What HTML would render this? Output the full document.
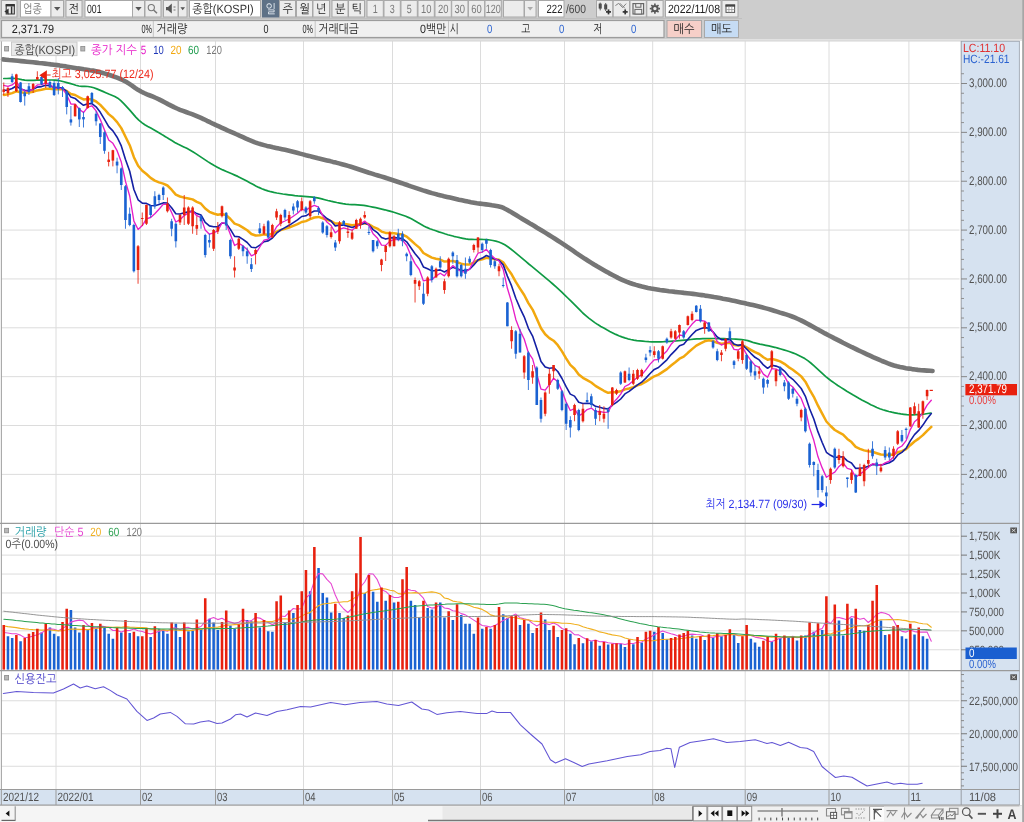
<!DOCTYPE html>
<html lang="ko"><head><meta charset="utf-8"><title>KOSPI chart</title>
<style>
html,body{margin:0;padding:0;background:#cdcdcd;overflow:hidden}
svg{display:block;font-family:"Liberation Sans","NanumGothic","Noto Sans CJK KR",sans-serif;text-rendering:geometricPrecision;will-change:transform}
</style></head><body>
<svg width="1024" height="822" viewBox="0 0 1024 822">
<rect x="0" y="0" width="1024" height="822" fill="#cdcdcd"/>
<rect x="0" y="41" width="961" height="748.5" fill="#ffffff"/>
<rect x="961" y="41" width="58.5" height="764" fill="#d6e2f0"/>
<rect x="0" y="789.5" width="961" height="15.5" fill="#d6e2f0"/>
<rect x="0" y="39" width="1022" height="2" fill="#e2e2e2"/>
<rect x="1019.5" y="41" width="2.5" height="764" fill="#ffffff"/>
<line x1="1019.4" y1="41" x2="1019.4" y2="805" stroke="#a8b0ba" stroke-width="1"/>
<line x1="56" y1="41" x2="56" y2="789.5" stroke="#dcdcdc" stroke-width="1"/>
<line x1="140.5" y1="41" x2="140.5" y2="789.5" stroke="#dcdcdc" stroke-width="1"/>
<line x1="215.5" y1="41" x2="215.5" y2="789.5" stroke="#dcdcdc" stroke-width="1"/>
<line x1="303.5" y1="41" x2="303.5" y2="789.5" stroke="#dcdcdc" stroke-width="1"/>
<line x1="392.5" y1="41" x2="392.5" y2="789.5" stroke="#dcdcdc" stroke-width="1"/>
<line x1="480.5" y1="41" x2="480.5" y2="789.5" stroke="#dcdcdc" stroke-width="1"/>
<line x1="564.5" y1="41" x2="564.5" y2="789.5" stroke="#dcdcdc" stroke-width="1"/>
<line x1="652.7" y1="41" x2="652.7" y2="789.5" stroke="#dcdcdc" stroke-width="1"/>
<line x1="745.2" y1="41" x2="745.2" y2="789.5" stroke="#dcdcdc" stroke-width="1"/>
<line x1="829" y1="41" x2="829" y2="789.5" stroke="#dcdcdc" stroke-width="1"/>
<line x1="908.9" y1="41" x2="908.9" y2="789.5" stroke="#dcdcdc" stroke-width="1"/>
<line x1="1.5" y1="474.38" x2="959.5" y2="474.38" stroke="#dcdcdc" stroke-width="1"/>
<line x1="1.5" y1="425.52" x2="959.5" y2="425.52" stroke="#dcdcdc" stroke-width="1"/>
<line x1="1.5" y1="376.65999999999997" x2="959.5" y2="376.65999999999997" stroke="#dcdcdc" stroke-width="1"/>
<line x1="1.5" y1="327.79999999999995" x2="959.5" y2="327.79999999999995" stroke="#dcdcdc" stroke-width="1"/>
<line x1="1.5" y1="278.94" x2="959.5" y2="278.94" stroke="#dcdcdc" stroke-width="1"/>
<line x1="1.5" y1="230.07999999999998" x2="959.5" y2="230.07999999999998" stroke="#dcdcdc" stroke-width="1"/>
<line x1="1.5" y1="181.22" x2="959.5" y2="181.22" stroke="#dcdcdc" stroke-width="1"/>
<line x1="1.5" y1="132.36" x2="959.5" y2="132.36" stroke="#dcdcdc" stroke-width="1"/>
<line x1="1.5" y1="83.5" x2="959.5" y2="83.5" stroke="#dcdcdc" stroke-width="1"/>
<line x1="1.5" y1="649.7700000000001" x2="959.5" y2="649.7700000000001" stroke="#dcdcdc" stroke-width="1"/>
<line x1="1.5" y1="630.84" x2="959.5" y2="630.84" stroke="#dcdcdc" stroke-width="1"/>
<line x1="1.5" y1="611.9100000000001" x2="959.5" y2="611.9100000000001" stroke="#dcdcdc" stroke-width="1"/>
<line x1="1.5" y1="592.98" x2="959.5" y2="592.98" stroke="#dcdcdc" stroke-width="1"/>
<line x1="1.5" y1="574.0500000000001" x2="959.5" y2="574.0500000000001" stroke="#dcdcdc" stroke-width="1"/>
<line x1="1.5" y1="555.12" x2="959.5" y2="555.12" stroke="#dcdcdc" stroke-width="1"/>
<line x1="1.5" y1="536.19" x2="959.5" y2="536.19" stroke="#dcdcdc" stroke-width="1"/>
<line x1="1.5" y1="700.75" x2="959.5" y2="700.75" stroke="#dcdcdc" stroke-width="1"/>
<line x1="1.5" y1="733.75" x2="959.5" y2="733.75" stroke="#dcdcdc" stroke-width="1"/>
<line x1="1.5" y1="766.25" x2="959.5" y2="766.25" stroke="#dcdcdc" stroke-width="1"/>
<rect x="6.7" y="636.25" width="2.55" height="33.35" fill="#1a62d2"/>
<rect x="10.89" y="638.0" width="2.55" height="31.6" fill="#1a62d2"/>
<rect x="19.29" y="641.25" width="2.55" height="28.35" fill="#1a62d2"/>
<rect x="40.27" y="632.5" width="2.55" height="37.1" fill="#1a62d2"/>
<rect x="48.67" y="627.5" width="2.55" height="42.1" fill="#1a62d2"/>
<rect x="52.86" y="633.75" width="2.55" height="35.85" fill="#1a62d2"/>
<rect x="57.06" y="636.25" width="2.55" height="33.35" fill="#1a62d2"/>
<rect x="69.65" y="610.0" width="2.55" height="59.6" fill="#1a62d2"/>
<rect x="73.85" y="627.5" width="2.55" height="42.1" fill="#1a62d2"/>
<rect x="78.05" y="632.5" width="2.55" height="37.1" fill="#1a62d2"/>
<rect x="86.44" y="630.0" width="2.55" height="39.6" fill="#1a62d2"/>
<rect x="94.83" y="628.75" width="2.55" height="40.85" fill="#1a62d2"/>
<rect x="103.23" y="627.5" width="2.55" height="42.1" fill="#1a62d2"/>
<rect x="107.42" y="633.75" width="2.55" height="35.85" fill="#1a62d2"/>
<rect x="111.62" y="638.75" width="2.55" height="30.85" fill="#1a62d2"/>
<rect x="120.02" y="632.5" width="2.55" height="37.1" fill="#1a62d2"/>
<rect x="128.41" y="633.0" width="2.55" height="36.6" fill="#1a62d2"/>
<rect x="136.8" y="636.25" width="2.55" height="33.35" fill="#1a62d2"/>
<rect x="149.4" y="637.0" width="2.55" height="32.6" fill="#1a62d2"/>
<rect x="157.79" y="628.75" width="2.55" height="40.85" fill="#1a62d2"/>
<rect x="161.99" y="630.5" width="2.55" height="39.1" fill="#1a62d2"/>
<rect x="166.18" y="633.75" width="2.55" height="35.85" fill="#1a62d2"/>
<rect x="174.58" y="623.75" width="2.55" height="45.85" fill="#1a62d2"/>
<rect x="178.77" y="637.0" width="2.55" height="32.6" fill="#1a62d2"/>
<rect x="187.17" y="631.25" width="2.55" height="38.35" fill="#1a62d2"/>
<rect x="191.37" y="630.5" width="2.55" height="39.1" fill="#1a62d2"/>
<rect x="199.76" y="628.75" width="2.55" height="40.85" fill="#1a62d2"/>
<rect x="208.15" y="618.75" width="2.55" height="50.85" fill="#1a62d2"/>
<rect x="212.35" y="622.5" width="2.55" height="47.1" fill="#1a62d2"/>
<rect x="216.55" y="630.0" width="2.55" height="39.6" fill="#1a62d2"/>
<rect x="229.14" y="625.5" width="2.55" height="44.1" fill="#1a62d2"/>
<rect x="233.34" y="628.75" width="2.55" height="40.85" fill="#1a62d2"/>
<rect x="245.93" y="620.0" width="2.55" height="49.6" fill="#1a62d2"/>
<rect x="250.12" y="621.25" width="2.55" height="48.35" fill="#1a62d2"/>
<rect x="258.52" y="627.5" width="2.55" height="42.1" fill="#1a62d2"/>
<rect x="266.91" y="631.25" width="2.55" height="38.35" fill="#1a62d2"/>
<rect x="271.11" y="631.75" width="2.55" height="37.85" fill="#1a62d2"/>
<rect x="283.7" y="622.5" width="2.55" height="47.1" fill="#1a62d2"/>
<rect x="292.09" y="613.0" width="2.55" height="56.6" fill="#1a62d2"/>
<rect x="308.88" y="591.25" width="2.55" height="78.35" fill="#1a62d2"/>
<rect x="317.27" y="568.0" width="2.55" height="101.6" fill="#1a62d2"/>
<rect x="321.47" y="593.0" width="2.55" height="76.6" fill="#1a62d2"/>
<rect x="325.67" y="597.5" width="2.55" height="72.1" fill="#1a62d2"/>
<rect x="329.87" y="612.5" width="2.55" height="57.1" fill="#1a62d2"/>
<rect x="338.26" y="613.0" width="2.55" height="56.6" fill="#1a62d2"/>
<rect x="342.46" y="618.0" width="2.55" height="51.6" fill="#1a62d2"/>
<rect x="363.44" y="593.0" width="2.55" height="76.6" fill="#1a62d2"/>
<rect x="371.84" y="591.75" width="2.55" height="77.85" fill="#1a62d2"/>
<rect x="376.03" y="601.75" width="2.55" height="67.85" fill="#1a62d2"/>
<rect x="384.43" y="600.75" width="2.55" height="68.85" fill="#1a62d2"/>
<rect x="392.82" y="602.5" width="2.55" height="67.1" fill="#1a62d2"/>
<rect x="409.61" y="600.75" width="2.55" height="68.85" fill="#1a62d2"/>
<rect x="413.81" y="605.0" width="2.55" height="64.6" fill="#1a62d2"/>
<rect x="418.0" y="617.5" width="2.55" height="52.1" fill="#1a62d2"/>
<rect x="426.4" y="608.0" width="2.55" height="61.6" fill="#1a62d2"/>
<rect x="430.59" y="609.5" width="2.55" height="60.1" fill="#1a62d2"/>
<rect x="438.99" y="602.5" width="2.55" height="67.1" fill="#1a62d2"/>
<rect x="443.19" y="617.5" width="2.55" height="52.1" fill="#1a62d2"/>
<rect x="451.58" y="620.0" width="2.55" height="49.6" fill="#1a62d2"/>
<rect x="459.97" y="615.0" width="2.55" height="54.6" fill="#1a62d2"/>
<rect x="464.17" y="623.75" width="2.55" height="45.85" fill="#1a62d2"/>
<rect x="468.37" y="623.75" width="2.55" height="45.85" fill="#1a62d2"/>
<rect x="472.56" y="633.75" width="2.55" height="35.85" fill="#1a62d2"/>
<rect x="480.96" y="628.75" width="2.55" height="40.85" fill="#1a62d2"/>
<rect x="489.35" y="628.75" width="2.55" height="40.85" fill="#1a62d2"/>
<rect x="501.94" y="614.25" width="2.55" height="55.35" fill="#1a62d2"/>
<rect x="506.14" y="618.0" width="2.55" height="51.6" fill="#1a62d2"/>
<rect x="518.73" y="625.0" width="2.55" height="44.6" fill="#1a62d2"/>
<rect x="527.12" y="623.75" width="2.55" height="45.85" fill="#1a62d2"/>
<rect x="531.32" y="633.0" width="2.55" height="36.6" fill="#1a62d2"/>
<rect x="543.91" y="619.5" width="2.55" height="50.1" fill="#1a62d2"/>
<rect x="548.11" y="630.0" width="2.55" height="39.6" fill="#1a62d2"/>
<rect x="556.5" y="637.0" width="2.55" height="32.6" fill="#1a62d2"/>
<rect x="569.1" y="633.75" width="2.55" height="35.85" fill="#1a62d2"/>
<rect x="573.29" y="644.25" width="2.55" height="25.35" fill="#1a62d2"/>
<rect x="581.69" y="643.25" width="2.55" height="26.35" fill="#1a62d2"/>
<rect x="590.08" y="641.25" width="2.55" height="28.35" fill="#1a62d2"/>
<rect x="598.47" y="645.75" width="2.55" height="23.85" fill="#1a62d2"/>
<rect x="606.87" y="644.5" width="2.55" height="25.1" fill="#1a62d2"/>
<rect x="619.46" y="643.75" width="2.55" height="25.85" fill="#1a62d2"/>
<rect x="623.66" y="647.0" width="2.55" height="22.6" fill="#1a62d2"/>
<rect x="632.05" y="644.25" width="2.55" height="25.35" fill="#1a62d2"/>
<rect x="640.44" y="642.5" width="2.55" height="27.1" fill="#1a62d2"/>
<rect x="653.03" y="631.75" width="2.55" height="37.85" fill="#1a62d2"/>
<rect x="661.43" y="633.0" width="2.55" height="36.6" fill="#1a62d2"/>
<rect x="665.63" y="639.25" width="2.55" height="30.35" fill="#1a62d2"/>
<rect x="690.81" y="635.5" width="2.55" height="34.1" fill="#1a62d2"/>
<rect x="695.0" y="638.75" width="2.55" height="30.85" fill="#1a62d2"/>
<rect x="703.4" y="640.0" width="2.55" height="29.6" fill="#1a62d2"/>
<rect x="711.79" y="637.5" width="2.55" height="32.1" fill="#1a62d2"/>
<rect x="720.19" y="636.25" width="2.55" height="33.35" fill="#1a62d2"/>
<rect x="732.78" y="635.0" width="2.55" height="34.6" fill="#1a62d2"/>
<rect x="736.98" y="643.0" width="2.55" height="26.6" fill="#1a62d2"/>
<rect x="749.57" y="638.75" width="2.55" height="30.85" fill="#1a62d2"/>
<rect x="753.76" y="642.5" width="2.55" height="27.1" fill="#1a62d2"/>
<rect x="757.96" y="646.75" width="2.55" height="22.85" fill="#1a62d2"/>
<rect x="770.55" y="641.25" width="2.55" height="28.35" fill="#1a62d2"/>
<rect x="778.95" y="638.0" width="2.55" height="31.6" fill="#1a62d2"/>
<rect x="787.34" y="637.5" width="2.55" height="32.1" fill="#1a62d2"/>
<rect x="795.73" y="640.5" width="2.55" height="29.1" fill="#1a62d2"/>
<rect x="804.13" y="635.5" width="2.55" height="34.1" fill="#1a62d2"/>
<rect x="812.52" y="631.75" width="2.55" height="37.85" fill="#1a62d2"/>
<rect x="820.91" y="630.0" width="2.55" height="39.6" fill="#1a62d2"/>
<rect x="829.31" y="636.25" width="2.55" height="33.35" fill="#1a62d2"/>
<rect x="837.7" y="620.5" width="2.55" height="49.1" fill="#1a62d2"/>
<rect x="841.9" y="635.5" width="2.55" height="34.1" fill="#1a62d2"/>
<rect x="850.29" y="618.25" width="2.55" height="51.35" fill="#1a62d2"/>
<rect x="858.69" y="630.0" width="2.55" height="39.6" fill="#1a62d2"/>
<rect x="862.88" y="630.75" width="2.55" height="38.85" fill="#1a62d2"/>
<rect x="879.67" y="620.5" width="2.55" height="49.1" fill="#1a62d2"/>
<rect x="883.87" y="635.0" width="2.55" height="34.6" fill="#1a62d2"/>
<rect x="900.66" y="636.25" width="2.55" height="33.35" fill="#1a62d2"/>
<rect x="904.86" y="638.75" width="2.55" height="30.85" fill="#1a62d2"/>
<rect x="913.25" y="634.5" width="2.55" height="35.1" fill="#1a62d2"/>
<rect x="921.64" y="636.25" width="2.55" height="33.35" fill="#1a62d2"/>
<rect x="925.84" y="638.75" width="2.55" height="30.85" fill="#1a62d2"/>
<polyline points="3.8,632.5 7.9,633.0 12.1,633.7 16.3,633.8 20.5,635.1 24.7,637.7 28.9,637.2 33.1,636.0 37.3,634.8 41.5,633.0 45.7,630.1 49.9,628.9 54.1,629.2 58.3,630.8 62.5,628.6 66.7,625.6 70.9,622.1 75.1,620.9 79.3,620.1 83.5,620.8 87.7,625.0 91.9,627.6 96.1,627.9 100.3,626.1 104.5,626.6 108.7,627.4 112.9,630.5 117.1,630.4 121.3,632.1 125.5,630.6 129.7,630.5 133.9,629.0 138.1,630.7 142.3,631.5 146.4,633.0 150.6,633.9 154.8,632.8 159.0,631.2 163.2,630.1 167.4,631.2 171.6,628.4 175.8,627.9 180.0,629.5 184.2,627.9 188.4,627.4 192.6,629.0 196.8,628.1 201.0,626.5 205.2,621.6 209.4,619.1 213.6,617.5 217.8,619.6 222.0,618.3 226.2,620.8 230.4,622.1 234.6,623.4 238.8,622.2 243.0,619.6 247.2,621.5 251.4,620.6 255.6,617.5 259.8,618.1 264.0,620.4 268.2,622.6 272.4,624.7 276.6,622.4 280.8,616.0 284.9,616.5 289.1,612.3 293.3,608.5 297.5,609.3 301.7,608.5 305.9,598.0 310.1,594.1 314.3,580.9 318.5,573.5 322.7,573.9 326.9,579.4 331.1,583.6 335.3,595.0 339.5,604.0 343.7,609.0 347.9,612.5 352.1,608.3 356.3,602.2 360.5,587.0 364.7,582.0 368.9,573.9 373.1,574.0 377.3,579.7 381.5,589.8 385.7,591.4 389.9,595.4 394.1,597.5 398.3,597.5 402.5,595.9 406.7,589.1 410.9,590.2 415.1,590.8 419.3,593.9 423.4,598.2 427.6,606.4 431.8,608.1 436.0,607.6 440.2,604.6 444.4,608.0 448.6,608.6 452.8,610.8 457.0,611.1 461.2,613.6 465.4,614.9 469.6,617.4 473.8,620.1 478.0,622.8 482.2,625.5 486.4,626.1 490.6,627.1 494.8,625.4 499.0,623.3 503.2,620.4 507.4,618.6 511.6,616.1 515.8,614.1 520.0,617.7 524.2,618.9 528.4,620.0 532.6,623.4 536.8,626.0 541.0,623.5 545.2,623.4 549.4,624.6 553.6,623.1 557.8,625.0 562.0,628.5 566.1,630.2 570.3,631.0 574.5,634.6 578.7,634.9 582.9,637.5 587.1,639.5 591.3,641.0 595.5,640.1 599.7,641.7 603.9,641.5 608.1,642.7 612.3,643.2 616.5,643.9 620.7,643.5 624.9,644.5 629.1,643.5 633.3,643.5 637.5,642.3 641.7,642.0 645.9,639.0 650.1,637.2 654.3,634.8 658.5,632.8 662.7,630.9 666.9,632.4 671.1,633.8 675.3,634.9 679.5,636.4 683.7,636.4 687.9,634.6 692.1,634.1 696.3,634.5 700.5,634.8 704.6,636.2 708.8,637.0 713.0,637.4 717.2,636.2 721.4,636.2 725.6,635.2 729.8,634.2 734.0,633.8 738.2,635.7 742.4,635.7 746.6,633.7 750.8,635.6 755.0,637.1 759.2,637.9 763.4,638.8 767.6,641.1 771.8,641.6 776.0,639.9 780.2,638.1 784.4,637.0 788.6,637.2 792.8,636.4 797.0,637.7 801.2,637.2 805.4,637.2 809.6,634.2 813.8,633.1 818.0,629.7 822.2,628.6 826.4,620.8 830.6,623.5 834.8,618.0 839.0,617.5 843.1,618.6 847.3,620.1 851.5,616.5 855.7,617.4 859.9,619.2 864.1,618.3 868.3,622.5 872.5,619.0 876.7,614.3 880.9,612.4 885.1,613.2 889.3,615.1 893.5,620.2 897.7,628.2 901.9,631.4 906.1,632.1 910.3,630.0 914.5,631.6 918.7,632.1 922.9,632.1 927.1,632.1 931.3,641.3" fill="none" stroke="#e648d2" stroke-width="1.1" stroke-linejoin="round" stroke-linecap="round"/>
<polyline points="3.8,626.0 7.9,626.6 12.1,627.1 16.3,627.6 20.5,628.4 24.7,628.9 28.9,629.3 33.1,629.6 37.3,629.8 41.5,630.1 45.7,630.0 49.9,630.0 54.1,630.4 58.3,630.9 62.5,630.7 66.7,629.8 70.9,629.0 75.1,629.1 79.3,629.4 83.5,629.4 87.7,629.6 91.9,629.0 96.1,628.5 100.3,627.9 104.5,627.2 108.7,627.0 112.9,627.3 117.1,627.1 121.3,627.3 125.5,626.6 129.7,627.1 133.9,627.3 138.1,627.5 142.3,627.5 146.4,627.8 150.6,629.2 154.8,630.0 159.0,630.0 163.2,629.9 167.4,630.4 171.6,630.0 175.8,630.0 180.0,630.5 184.2,630.4 188.4,630.6 192.6,630.4 196.8,629.5 201.0,629.5 205.2,627.8 209.4,627.7 213.6,627.2 217.8,627.1 222.0,626.4 226.2,625.1 230.4,625.0 234.6,624.6 238.8,624.5 243.0,623.5 247.2,623.0 251.4,622.3 255.6,621.9 259.8,622.0 264.0,621.2 268.2,621.6 272.4,621.6 276.6,620.2 280.8,619.0 284.9,618.7 289.1,619.3 293.3,619.0 297.5,618.1 301.7,616.2 305.9,613.6 310.1,612.6 314.3,608.7 318.5,605.7 322.7,604.1 326.9,603.5 331.1,603.1 335.3,602.3 339.5,602.3 343.7,601.8 347.9,601.6 352.1,599.6 356.3,596.6 360.5,593.4 364.7,593.3 368.9,590.9 373.1,590.0 377.3,589.4 381.5,588.6 385.7,589.0 389.9,590.3 394.1,590.9 398.3,593.6 402.5,594.1 406.7,592.9 410.9,593.0 415.1,592.6 419.3,593.3 423.4,592.7 427.6,592.2 431.8,591.9 436.0,592.5 440.2,593.9 444.4,598.0 448.6,598.9 452.8,601.1 457.0,601.8 461.2,602.4 465.4,604.2 469.6,605.4 473.8,607.3 478.0,608.1 482.2,609.4 486.4,611.8 490.6,614.9 494.8,616.1 499.0,616.2 503.2,616.0 507.4,616.9 511.6,617.3 515.8,617.6 520.0,618.7 524.2,619.6 528.4,619.9 532.6,621.0 536.8,621.4 541.0,621.8 545.2,622.0 549.4,622.3 553.6,622.4 557.8,622.6 562.0,623.2 566.1,623.2 570.3,623.5 574.5,624.3 578.7,625.0 582.9,626.8 587.1,628.0 591.3,629.1 595.5,630.3 599.7,631.9 603.9,632.7 608.1,633.9 612.3,634.9 616.5,635.5 620.7,636.2 624.9,638.0 629.1,639.0 633.3,639.7 637.5,640.2 641.7,640.5 645.9,640.6 650.1,640.7 654.3,640.6 658.5,639.8 662.7,639.5 666.9,639.3 671.1,639.3 675.3,639.1 679.5,638.8 683.7,638.2 687.9,637.6 692.1,637.1 696.3,636.9 700.5,636.5 704.6,636.4 708.8,635.7 713.0,635.6 717.2,635.1 721.4,635.0 725.6,634.7 729.8,634.5 734.0,634.8 738.2,635.3 742.4,635.8 746.6,635.4 750.8,635.4 755.0,635.6 759.2,636.1 763.4,636.4 767.6,636.6 771.8,637.1 776.0,637.0 780.2,637.0 784.4,636.9 788.6,636.8 792.8,637.0 797.0,637.1 801.2,637.2 805.4,637.2 809.6,636.5 813.8,636.7 818.0,636.1 822.2,635.4 826.4,633.4 830.6,634.0 834.8,632.3 839.0,631.2 843.1,630.6 847.3,628.8 851.5,627.9 855.7,626.2 859.9,626.0 864.1,625.7 868.3,625.1 872.5,623.3 876.7,620.7 880.9,619.7 885.1,619.7 889.3,619.6 893.5,619.8 897.7,619.5 901.9,620.1 906.1,620.6 910.3,621.9 914.5,621.9 918.7,623.0 922.9,623.8 927.1,624.0 931.3,627.2" fill="none" stroke="#f0b020" stroke-width="1.1" stroke-linejoin="round" stroke-linecap="round"/>
<rect x="2.5" y="625.0" width="2.55" height="44.6" fill="#e8200e"/>
<rect x="15.09" y="635.0" width="2.55" height="34.6" fill="#e8200e"/>
<rect x="23.48" y="638.0" width="2.55" height="31.6" fill="#e8200e"/>
<rect x="27.68" y="633.75" width="2.55" height="35.85" fill="#e8200e"/>
<rect x="31.88" y="632.0" width="2.55" height="37.6" fill="#e8200e"/>
<rect x="36.08" y="628.75" width="2.55" height="40.85" fill="#e8200e"/>
<rect x="44.47" y="623.75" width="2.55" height="45.85" fill="#e8200e"/>
<rect x="61.26" y="622.0" width="2.55" height="47.6" fill="#e8200e"/>
<rect x="65.45" y="608.75" width="2.55" height="60.85" fill="#e8200e"/>
<rect x="82.24" y="625.0" width="2.55" height="44.6" fill="#e8200e"/>
<rect x="90.64" y="623.0" width="2.55" height="46.6" fill="#e8200e"/>
<rect x="99.03" y="623.75" width="2.55" height="45.85" fill="#e8200e"/>
<rect x="115.82" y="628.0" width="2.55" height="41.6" fill="#e8200e"/>
<rect x="124.21" y="620.0" width="2.55" height="49.6" fill="#e8200e"/>
<rect x="132.61" y="631.75" width="2.55" height="37.85" fill="#e8200e"/>
<rect x="141.0" y="636.25" width="2.55" height="33.35" fill="#e8200e"/>
<rect x="145.2" y="628.0" width="2.55" height="41.6" fill="#e8200e"/>
<rect x="153.59" y="626.25" width="2.55" height="43.35" fill="#e8200e"/>
<rect x="170.38" y="622.5" width="2.55" height="47.1" fill="#e8200e"/>
<rect x="182.97" y="622.5" width="2.55" height="47.1" fill="#e8200e"/>
<rect x="195.56" y="619.5" width="2.55" height="50.1" fill="#e8200e"/>
<rect x="203.96" y="598.25" width="2.55" height="71.35" fill="#e8200e"/>
<rect x="220.74" y="622.0" width="2.55" height="47.6" fill="#e8200e"/>
<rect x="224.94" y="610.5" width="2.55" height="59.1" fill="#e8200e"/>
<rect x="237.53" y="624.5" width="2.55" height="45.1" fill="#e8200e"/>
<rect x="241.73" y="608.75" width="2.55" height="60.85" fill="#e8200e"/>
<rect x="254.32" y="613.0" width="2.55" height="56.6" fill="#e8200e"/>
<rect x="262.71" y="620.0" width="2.55" height="49.6" fill="#e8200e"/>
<rect x="275.31" y="601.25" width="2.55" height="68.35" fill="#e8200e"/>
<rect x="279.5" y="595.5" width="2.55" height="74.1" fill="#e8200e"/>
<rect x="287.9" y="610.5" width="2.55" height="59.1" fill="#e8200e"/>
<rect x="296.29" y="605.0" width="2.55" height="64.6" fill="#e8200e"/>
<rect x="300.49" y="591.25" width="2.55" height="78.35" fill="#e8200e"/>
<rect x="304.68" y="570.0" width="2.55" height="99.6" fill="#e8200e"/>
<rect x="313.08" y="547.0" width="2.55" height="122.6" fill="#e8200e"/>
<rect x="334.06" y="603.75" width="2.55" height="65.85" fill="#e8200e"/>
<rect x="346.65" y="615.5" width="2.55" height="54.1" fill="#e8200e"/>
<rect x="350.85" y="591.25" width="2.55" height="78.35" fill="#e8200e"/>
<rect x="355.05" y="573.25" width="2.55" height="96.35" fill="#e8200e"/>
<rect x="359.25" y="537.0" width="2.55" height="132.6" fill="#e8200e"/>
<rect x="367.64" y="575.0" width="2.55" height="94.6" fill="#e8200e"/>
<rect x="380.23" y="587.5" width="2.55" height="82.1" fill="#e8200e"/>
<rect x="388.62" y="595.0" width="2.55" height="74.6" fill="#e8200e"/>
<rect x="397.02" y="601.75" width="2.55" height="67.85" fill="#e8200e"/>
<rect x="401.22" y="579.25" width="2.55" height="90.35" fill="#e8200e"/>
<rect x="405.41" y="567.0" width="2.55" height="102.6" fill="#e8200e"/>
<rect x="422.2" y="600.75" width="2.55" height="68.85" fill="#e8200e"/>
<rect x="434.79" y="602.5" width="2.55" height="67.1" fill="#e8200e"/>
<rect x="447.38" y="611.25" width="2.55" height="58.35" fill="#e8200e"/>
<rect x="455.78" y="604.25" width="2.55" height="65.35" fill="#e8200e"/>
<rect x="476.76" y="617.5" width="2.55" height="52.1" fill="#e8200e"/>
<rect x="485.16" y="627.0" width="2.55" height="42.6" fill="#e8200e"/>
<rect x="493.55" y="625.0" width="2.55" height="44.6" fill="#e8200e"/>
<rect x="497.75" y="607.0" width="2.55" height="62.6" fill="#e8200e"/>
<rect x="510.34" y="616.25" width="2.55" height="53.35" fill="#e8200e"/>
<rect x="514.53" y="615.0" width="2.55" height="54.6" fill="#e8200e"/>
<rect x="522.93" y="620.0" width="2.55" height="49.6" fill="#e8200e"/>
<rect x="535.52" y="628.0" width="2.55" height="41.6" fill="#e8200e"/>
<rect x="539.72" y="612.5" width="2.55" height="57.1" fill="#e8200e"/>
<rect x="552.31" y="625.75" width="2.55" height="43.85" fill="#e8200e"/>
<rect x="560.7" y="630.0" width="2.55" height="39.6" fill="#e8200e"/>
<rect x="564.9" y="628.25" width="2.55" height="41.35" fill="#e8200e"/>
<rect x="577.49" y="638.0" width="2.55" height="31.6" fill="#e8200e"/>
<rect x="585.88" y="638.25" width="2.55" height="31.35" fill="#e8200e"/>
<rect x="594.28" y="640.0" width="2.55" height="29.6" fill="#e8200e"/>
<rect x="602.67" y="642.0" width="2.55" height="27.6" fill="#e8200e"/>
<rect x="611.07" y="643.75" width="2.55" height="25.85" fill="#e8200e"/>
<rect x="615.26" y="643.25" width="2.55" height="26.35" fill="#e8200e"/>
<rect x="627.85" y="639.5" width="2.55" height="30.1" fill="#e8200e"/>
<rect x="636.25" y="637.0" width="2.55" height="32.6" fill="#e8200e"/>
<rect x="644.64" y="631.75" width="2.55" height="37.85" fill="#e8200e"/>
<rect x="648.84" y="630.75" width="2.55" height="38.85" fill="#e8200e"/>
<rect x="657.23" y="627.0" width="2.55" height="42.6" fill="#e8200e"/>
<rect x="669.82" y="638.0" width="2.55" height="31.6" fill="#e8200e"/>
<rect x="674.02" y="637.0" width="2.55" height="32.6" fill="#e8200e"/>
<rect x="678.22" y="634.5" width="2.55" height="35.1" fill="#e8200e"/>
<rect x="682.41" y="633.0" width="2.55" height="36.6" fill="#e8200e"/>
<rect x="686.61" y="630.5" width="2.55" height="39.1" fill="#e8200e"/>
<rect x="699.2" y="636.25" width="2.55" height="33.35" fill="#e8200e"/>
<rect x="707.6" y="634.25" width="2.55" height="35.35" fill="#e8200e"/>
<rect x="715.99" y="633.25" width="2.55" height="36.35" fill="#e8200e"/>
<rect x="724.38" y="635.0" width="2.55" height="34.6" fill="#e8200e"/>
<rect x="728.58" y="629.25" width="2.55" height="40.35" fill="#e8200e"/>
<rect x="741.17" y="636.25" width="2.55" height="33.35" fill="#e8200e"/>
<rect x="745.37" y="625.0" width="2.55" height="44.6" fill="#e8200e"/>
<rect x="762.16" y="640.75" width="2.55" height="28.85" fill="#e8200e"/>
<rect x="766.35" y="636.75" width="2.55" height="32.85" fill="#e8200e"/>
<rect x="774.75" y="633.75" width="2.55" height="35.85" fill="#e8200e"/>
<rect x="783.14" y="635.5" width="2.55" height="34.1" fill="#e8200e"/>
<rect x="791.54" y="637.0" width="2.55" height="32.6" fill="#e8200e"/>
<rect x="799.93" y="635.5" width="2.55" height="34.1" fill="#e8200e"/>
<rect x="808.32" y="622.5" width="2.55" height="47.1" fill="#e8200e"/>
<rect x="816.72" y="623.25" width="2.55" height="46.35" fill="#e8200e"/>
<rect x="825.11" y="596.25" width="2.55" height="73.35" fill="#e8200e"/>
<rect x="833.51" y="604.5" width="2.55" height="65.1" fill="#e8200e"/>
<rect x="846.1" y="603.75" width="2.55" height="65.85" fill="#e8200e"/>
<rect x="854.49" y="608.75" width="2.55" height="60.85" fill="#e8200e"/>
<rect x="867.08" y="625.0" width="2.55" height="44.6" fill="#e8200e"/>
<rect x="871.28" y="600.75" width="2.55" height="68.85" fill="#e8200e"/>
<rect x="875.48" y="585.0" width="2.55" height="84.6" fill="#e8200e"/>
<rect x="888.07" y="634.25" width="2.55" height="35.35" fill="#e8200e"/>
<rect x="892.26" y="626.25" width="2.55" height="43.35" fill="#e8200e"/>
<rect x="896.46" y="625.0" width="2.55" height="44.6" fill="#e8200e"/>
<rect x="909.05" y="623.75" width="2.55" height="45.85" fill="#e8200e"/>
<rect x="917.45" y="627.5" width="2.55" height="42.1" fill="#e8200e"/>
<polyline points="3.8,619.2 6.8,619.5 9.8,619.8 12.8,620.1 15.8,620.5 18.8,620.8 21.8,621.1 24.8,621.4 27.8,621.7 30.8,622.0 33.8,622.3 36.8,622.6 39.8,622.9 42.8,623.1 45.8,623.4 48.8,623.6 51.8,623.9 54.8,624.1 57.8,624.4 60.8,624.6 63.8,624.8 66.8,625.0 69.8,625.2 72.8,625.4 75.8,625.6 78.8,625.8 81.8,626.0 84.8,626.2 87.8,626.3 90.8,626.5 93.8,626.7 96.8,626.8 99.8,627.0 102.8,627.1 105.8,627.3 108.8,627.4 111.8,627.6 114.8,627.7 117.8,627.8 120.8,627.9 123.8,628.0 126.8,628.1 129.8,628.2 132.8,628.3 135.8,628.4 138.8,628.5 141.8,628.6 144.8,628.6 147.8,628.7 150.8,628.8 153.8,628.8 156.8,628.8 159.8,628.9 162.8,628.9 165.8,628.9 168.8,628.9 171.8,628.9 174.8,628.9 177.8,628.9 180.8,628.9 183.8,628.9 186.8,628.9 189.8,628.8 192.8,628.8 195.8,628.8 198.8,628.8 201.8,628.7 204.8,628.7 207.8,628.7 210.8,628.7 213.8,628.7 216.8,628.6 219.8,628.6 222.8,628.6 225.8,628.5 228.8,628.4 231.8,628.4 234.8,628.3 237.8,628.1 240.8,628.0 243.8,627.8 246.8,627.6 249.8,627.4 252.8,627.2 255.8,627.0 258.8,626.7 261.8,626.5 264.8,626.2 267.8,626.0 270.8,625.7 273.8,625.4 276.8,625.1 279.8,624.8 282.8,624.5 285.8,624.2 288.8,623.9 291.8,623.5 294.8,623.1 297.8,622.7 300.8,622.2 303.8,621.6 306.8,621.1 309.8,620.7 312.8,620.3 315.8,619.9 318.8,619.7 321.8,619.6 324.8,619.5 327.8,619.4 330.8,619.4 333.8,619.3 336.8,619.1 339.8,618.8 342.8,618.4 345.8,617.8 348.8,617.2 351.8,616.6 354.8,615.9 357.8,615.2 360.8,614.6 363.8,614.0 366.8,613.4 369.8,613.0 372.8,612.5 375.8,612.1 378.8,611.6 381.8,611.2 384.8,610.8 387.8,610.3 390.8,609.9 393.8,609.4 396.8,608.9 399.8,608.4 402.8,608.0 405.8,607.5 408.8,607.0 411.8,606.6 414.8,606.3 417.8,606.0 420.8,605.7 423.8,605.4 426.8,605.2 429.8,605.0 432.8,604.9 435.8,604.7 438.8,604.6 441.8,604.4 444.8,604.3 447.8,604.1 450.8,604.0 453.8,603.9 456.8,603.8 459.8,603.8 462.8,603.8 465.8,603.8 468.8,603.8 471.8,603.9 474.8,604.0 477.8,604.1 480.8,604.2 483.8,604.3 486.8,604.4 489.8,604.5 492.8,604.5 495.8,604.5 498.8,604.0 501.8,603.4 504.8,603.0 507.8,603.0 510.8,603.0 513.8,603.0 516.8,603.1 519.8,603.3 522.8,603.4 525.8,603.5 528.8,603.7 531.8,603.8 534.8,603.9 537.8,604.0 540.8,604.2 543.8,604.3 546.8,604.6 549.8,605.0 552.8,605.5 555.8,606.3 558.8,607.2 561.8,608.0 564.8,608.7 567.8,609.2 570.8,609.7 573.8,610.2 576.8,610.6 579.8,611.1 582.8,611.5 585.8,611.9 588.8,612.4 591.8,612.8 594.8,613.2 597.8,613.7 600.8,614.2 603.8,614.8 606.8,615.4 609.8,616.0 612.8,616.8 615.8,617.6 618.8,618.4 621.8,619.2 624.8,620.0 627.8,620.7 630.8,621.4 633.8,622.1 636.8,622.7 639.8,623.4 642.8,624.0 645.8,624.6 648.8,625.2 651.8,625.7 654.8,626.2 657.8,626.7 660.8,627.1 663.8,627.4 666.8,627.8 669.8,628.1 672.8,628.4 675.8,628.7 678.8,629.1 681.8,629.5 684.8,629.9 687.8,630.3 690.8,630.8 693.8,631.2 696.8,631.6 699.8,632.0 702.8,632.3 705.8,632.6 708.8,632.8 711.8,632.9 714.8,633.1 717.8,633.2 720.8,633.3 723.8,633.4 726.8,633.4 729.8,633.5 732.8,633.6 735.8,633.8 738.8,634.0 741.8,634.2 744.8,634.5 747.8,634.7 750.8,634.9 753.8,635.2 756.8,635.4 759.8,635.6 762.8,635.8 765.8,636.0 768.8,636.2 771.8,636.3 774.8,636.5 777.8,636.6 780.8,636.8 783.8,636.9 786.8,637.0 789.8,637.0 792.8,637.0 795.8,637.0 798.8,636.9 801.8,636.7 804.8,636.6 807.8,636.3 810.8,636.1 813.8,635.9 816.8,635.7 819.8,635.5 822.8,635.4 825.8,635.3 828.8,635.2 831.8,635.1 834.8,635.0 837.8,634.9 840.8,634.8 843.8,634.6 846.8,634.3 849.8,634.0 852.8,633.6 855.8,633.2 858.8,632.7 861.8,632.3 864.8,631.8 867.8,631.5 870.8,631.2 873.8,630.9 876.8,630.7 879.8,630.6 882.8,630.4 885.8,630.3 888.8,630.2 891.8,630.1 894.8,630.0 897.8,629.9 900.8,629.8 903.8,629.7 906.8,629.7 909.8,629.6 912.8,629.5 915.8,629.5 918.8,629.5 921.8,629.5 924.8,629.6 927.8,629.8 930.8,630.0 931.0,630.0" fill="none" stroke="#2aa050" stroke-width="1.05" stroke-linejoin="round" stroke-linecap="round"/>
<polyline points="3.8,611.2 6.8,611.6 9.8,611.9 12.8,612.2 15.8,612.6 18.8,612.9 21.8,613.3 24.8,613.6 27.8,613.9 30.8,614.3 33.8,614.6 36.8,615.0 39.8,615.3 42.8,615.6 45.8,615.9 48.8,616.2 51.8,616.5 54.8,616.8 57.8,617.1 60.8,617.4 63.8,617.6 66.8,617.8 69.8,618.1 72.8,618.3 75.8,618.5 78.8,618.7 81.8,618.9 84.8,619.1 87.8,619.3 90.8,619.5 93.8,619.6 96.8,619.8 99.8,620.0 102.8,620.1 105.8,620.3 108.8,620.4 111.8,620.6 114.8,620.7 117.8,620.9 120.8,621.0 123.8,621.2 126.8,621.3 129.8,621.5 132.8,621.6 135.8,621.8 138.8,621.9 141.8,622.0 144.8,622.1 147.8,622.3 150.8,622.4 153.8,622.5 156.8,622.6 159.8,622.7 162.8,622.8 165.8,622.8 168.8,622.9 171.8,623.0 174.8,623.0 177.8,623.0 180.8,623.1 183.8,623.1 186.8,623.1 189.8,623.1 192.8,623.2 195.8,623.2 198.8,623.2 201.8,623.2 204.8,623.2 207.8,623.2 210.8,623.2 213.8,623.2 216.8,623.2 219.8,623.2 222.8,623.2 225.8,623.1 228.8,623.1 231.8,623.1 234.8,623.1 237.8,623.1 240.8,623.1 243.8,623.1 246.8,623.0 249.8,623.0 252.8,623.0 255.8,623.0 258.8,623.0 261.8,623.0 264.8,622.9 267.8,622.9 270.8,622.8 273.8,622.8 276.8,622.8 279.8,622.7 282.8,622.6 285.8,622.6 288.8,622.5 291.8,622.5 294.8,622.4 297.8,622.3 300.8,622.3 303.8,622.2 306.8,622.2 309.8,622.1 312.8,622.0 315.8,622.0 318.8,621.9 321.8,621.8 324.8,621.7 327.8,621.7 330.8,621.6 333.8,621.5 336.8,621.4 339.8,621.3 342.8,621.1 345.8,621.0 348.8,620.9 351.8,620.7 354.8,620.6 357.8,620.4 360.8,620.3 363.8,620.1 366.8,620.0 369.8,619.8 372.8,619.6 375.8,619.5 378.8,619.3 381.8,619.1 384.8,619.0 387.8,618.9 390.8,618.7 393.8,618.6 396.8,618.4 399.8,618.3 402.8,618.2 405.8,618.0 408.8,617.9 411.8,617.8 414.8,617.6 417.8,617.5 420.8,617.4 423.8,617.3 426.8,617.2 429.8,617.0 432.8,616.9 435.8,616.9 438.8,616.8 441.8,616.7 444.8,616.7 447.8,616.6 450.8,616.6 453.8,616.5 456.8,616.5 459.8,616.5 462.8,616.5 465.8,616.5 468.8,616.5 471.8,616.5 474.8,616.5 477.8,616.5 480.8,616.4 483.8,616.4 486.8,616.4 489.8,616.3 492.8,616.3 495.8,616.2 498.8,616.1 501.8,616.0 504.8,615.9 507.8,615.8 510.8,615.6 513.8,615.5 516.8,615.3 519.8,615.2 522.8,615.0 525.8,614.9 528.8,614.8 531.8,614.7 534.8,614.6 537.8,614.5 540.8,614.5 543.8,614.5 546.8,614.5 549.8,614.6 552.8,614.6 555.8,614.7 558.8,614.7 561.8,614.8 564.8,614.9 567.8,615.0 570.8,615.1 573.8,615.2 576.8,615.4 579.8,615.5 582.8,615.6 585.8,615.7 588.8,615.8 591.8,615.9 594.8,616.0 597.8,616.1 600.8,616.2 603.8,616.2 606.8,616.3 609.8,616.3 612.8,616.4 615.8,616.4 618.8,616.4 621.8,616.5 624.8,616.5 627.8,616.5 630.8,616.5 633.8,616.5 636.8,616.6 639.8,616.6 642.8,616.6 645.8,616.6 648.8,616.6 651.8,616.6 654.8,616.6 657.8,616.7 660.8,616.7 663.8,616.7 666.8,616.8 669.8,616.8 672.8,616.9 675.8,616.9 678.8,617.0 681.8,617.0 684.8,617.1 687.8,617.2 690.8,617.3 693.8,617.5 696.8,617.6 699.8,617.7 702.8,617.8 705.8,618.0 708.8,618.1 711.8,618.3 714.8,618.4 717.8,618.6 720.8,618.7 723.8,618.8 726.8,619.0 729.8,619.1 732.8,619.2 735.8,619.3 738.8,619.2 741.8,619.0 744.8,619.0 747.8,619.1 750.8,619.2 753.8,619.3 756.8,619.4 759.8,619.6 762.8,619.7 765.8,619.8 768.8,619.9 771.8,620.1 774.8,620.2 777.8,620.4 780.8,620.5 783.8,620.7 786.8,620.8 789.8,621.0 792.8,621.1 795.8,621.3 798.8,621.5 801.8,621.7 804.8,621.9 807.8,622.1 810.8,622.3 813.8,622.6 816.8,622.8 819.8,623.0 822.8,623.2 825.8,623.4 828.8,623.6 831.8,623.8 834.8,624.0 837.8,624.2 840.8,624.4 843.8,624.5 846.8,624.7 849.8,624.9 852.8,625.1 855.8,625.3 858.8,625.5 861.8,625.7 864.8,625.9 867.8,626.1 870.8,626.3 873.8,626.5 876.8,626.7 879.8,626.9 882.8,627.1 885.8,627.3 888.8,627.5 891.8,627.7 894.8,627.9 897.8,628.1 900.8,628.3 903.8,628.5 906.8,628.7 909.8,628.9 912.8,629.2 915.8,629.4 918.8,629.6 921.8,629.8 924.8,630.0 927.8,630.3 930.8,630.5 931.0,630.5" fill="none" stroke="#8f8f8f" stroke-width="0.95" stroke-linejoin="round" stroke-linecap="round"/>
<polyline points="3.3,693.4 16.7,691.4 33.4,692.4 53.4,693.0 63.5,689.0 73.5,684.0 80.2,688.0 86.8,686.0 95.2,688.7 103.5,686.7 110.2,690.4 116.9,694.7 126.9,699.0 136.9,711.4 147.0,720.4 153.6,718.0 160.3,714.0 170.3,712.4 177.0,716.4 185.4,723.8 193.7,724.0 200.4,722.0 208.8,720.8 217.0,723.4 222.0,723.0 230.5,719.0 235.5,714.8 240.5,714.0 247.0,717.0 255.5,713.0 267.0,715.4 277.0,711.4 287.0,709.8 300.6,706.4 310.6,707.0 320.6,704.7 330.7,702.4 345.0,704.7 360.0,702.4 376.8,701.4 386.8,704.0 398.5,705.4 411.8,702.0 421.8,709.0 428.5,710.0 436.9,714.4 446.9,712.8 460.3,711.4 477.0,713.4 487.0,713.4 492.0,711.0 497.0,712.4 510.4,712.4 520.4,724.8 530.4,734.0 542.0,744.0 550.4,759.8 555.5,763.0 565.5,758.8 573.8,762.5 582.2,766.5 588.9,764.0 607.2,760.8 627.3,756.5 640.6,754.8 650.0,751.5 660.0,750.5 666.7,748.2 671.0,748.8 674.7,767.5 679.4,747.2 690.0,742.5 703.5,740.5 713.5,738.8 726.8,742.5 740.2,741.5 755.2,739.8 767.0,743.5 772.0,742.5 780.3,745.5 788.6,742.2 800.3,747.5 807.0,748.2 813.7,751.5 822.0,766.5 828.7,772.2 835.4,777.5 843.7,776.0 852.0,777.2 860.4,782.2 867.0,786.0 877.0,784.0 887.0,782.0 893.8,784.2 900.5,783.2 907.2,784.2 917.2,784.2 922.2,783.2" fill="none" stroke="#6255d4" stroke-width="1.05" stroke-linejoin="round" stroke-linecap="round"/>
<polyline points="3.0,59.4 6.0,59.7 9.0,60.0 12.0,60.2 15.0,60.5 18.0,60.8 21.0,61.1 24.0,61.4 27.0,61.7 30.0,62.0 33.0,62.3 36.0,62.6 39.0,63.0 42.0,63.3 45.0,63.6 48.0,64.0 51.0,64.4 54.0,64.7 57.0,65.1 60.0,65.6 63.0,66.0 66.0,66.4 69.0,66.9 72.0,67.4 75.0,67.9 78.0,68.4 81.0,68.8 84.0,69.3 87.0,69.7 90.0,70.2 93.0,70.6 96.0,71.2 99.0,71.9 102.0,72.7 105.0,73.6 108.0,74.5 111.0,75.5 114.0,76.6 117.0,77.7 120.0,78.9 123.0,80.2 126.0,81.8 129.0,83.6 132.0,85.6 135.0,87.8 138.0,89.8 141.0,91.5 144.0,93.0 147.0,94.3 150.0,95.5 153.0,96.7 156.0,98.0 159.0,99.4 162.0,100.9 165.0,102.5 168.0,104.1 171.0,105.6 174.0,107.1 177.0,108.5 180.0,109.8 183.0,110.9 186.0,112.0 189.0,113.1 192.0,114.1 195.0,115.3 198.0,116.6 201.0,117.9 204.0,119.3 207.0,120.8 210.0,122.2 213.0,123.7 216.0,125.1 219.0,126.4 222.0,127.8 225.0,129.2 228.0,130.6 231.0,131.9 234.0,133.2 237.0,134.5 240.0,135.9 243.0,137.2 246.0,138.6 249.0,139.9 252.0,141.1 255.0,142.3 258.0,143.4 261.0,144.3 264.0,145.1 267.0,145.9 270.0,146.6 273.0,147.3 276.0,147.9 279.0,148.6 282.0,149.2 285.0,149.8 288.0,150.5 291.0,151.2 294.0,152.0 297.0,152.8 300.0,153.6 303.0,154.4 306.0,155.2 309.0,155.9 312.0,156.7 315.0,157.5 318.0,158.3 321.0,159.0 324.0,159.7 327.0,160.4 330.0,161.1 333.0,161.9 336.0,162.6 339.0,163.4 342.0,164.2 345.0,165.0 348.0,165.9 351.0,166.8 354.0,167.7 357.0,168.7 360.0,169.7 363.0,170.7 366.0,171.7 369.0,172.7 372.0,173.6 375.0,174.6 378.0,175.5 381.0,176.4 384.0,177.3 387.0,178.3 390.0,179.2 393.0,180.2 396.0,181.2 399.0,182.2 402.0,183.2 405.0,184.3 408.0,185.3 411.0,186.4 414.0,187.4 417.0,188.4 420.0,189.4 423.0,190.4 426.0,191.3 429.0,192.2 432.0,193.1 435.0,193.9 438.0,194.7 441.0,195.4 444.0,196.2 447.0,196.9 450.0,197.6 453.0,198.3 456.0,199.0 459.0,199.7 462.0,200.3 465.0,200.9 468.0,201.6 471.0,202.2 474.0,202.7 477.0,203.2 480.0,203.6 483.0,204.0 486.0,204.4 489.0,204.8 492.0,205.3 495.0,205.7 498.0,206.2 501.0,206.9 504.0,208.2 507.0,209.7 510.0,211.4 513.0,213.2 516.0,215.0 519.0,216.9 522.0,218.7 525.0,220.5 528.0,222.3 531.0,224.1 534.0,225.8 537.0,227.7 540.0,229.5 543.0,231.3 546.0,233.1 549.0,235.0 552.0,236.9 555.0,238.8 558.0,240.7 561.0,242.6 564.0,244.6 567.0,246.7 570.0,248.7 573.0,250.7 576.0,252.8 579.0,254.8 582.0,256.8 585.0,258.8 588.0,260.7 591.0,262.6 594.0,264.5 597.0,266.3 600.0,268.0 603.0,269.7 606.0,271.4 609.0,273.1 612.0,274.7 615.0,276.3 618.0,277.9 621.0,279.3 624.0,280.7 627.0,281.9 630.0,283.0 633.0,284.0 636.0,284.9 639.0,285.7 642.0,286.5 645.0,287.2 648.0,287.9 651.0,288.5 654.0,289.0 657.0,289.5 660.0,290.0 663.0,290.4 666.0,290.8 669.0,291.2 672.0,291.5 675.0,291.9 678.0,292.2 681.0,292.5 684.0,292.9 687.0,293.2 690.0,293.5 693.0,293.9 696.0,294.3 699.0,294.7 702.0,295.1 705.0,295.6 708.0,296.0 711.0,296.5 714.0,297.1 717.0,297.6 720.0,298.1 723.0,298.7 726.0,299.2 729.0,299.8 732.0,300.4 735.0,301.0 738.0,301.7 741.0,302.4 744.0,303.1 747.0,303.8 750.0,304.4 753.0,305.1 756.0,305.8 759.0,306.5 762.0,307.3 765.0,308.1 768.0,308.9 771.0,309.8 774.0,310.7 777.0,311.6 780.0,312.6 783.0,313.5 786.0,314.4 789.0,315.4 792.0,316.5 795.0,317.7 798.0,319.0 801.0,320.4 804.0,321.9 807.0,323.5 810.0,325.1 813.0,326.7 816.0,328.4 819.0,330.1 822.0,331.7 825.0,333.4 828.0,335.0 831.0,336.5 834.0,338.1 837.0,339.6 840.0,341.1 843.0,342.7 846.0,344.2 849.0,345.7 852.0,347.2 855.0,348.6 858.0,350.1 861.0,351.5 864.0,352.9 867.0,354.3 870.0,355.7 873.0,357.1 876.0,358.4 879.0,359.7 882.0,361.0 885.0,362.2 888.0,363.4 891.0,364.5 894.0,365.5 897.0,366.3 900.0,367.0 903.0,367.6 906.0,368.2 909.0,368.6 912.0,369.1 915.0,369.5 918.0,369.9 921.0,370.2 924.0,370.4 927.0,370.6 930.0,370.8 932.5,371.0" fill="none" stroke="#767676" stroke-width="4.6" stroke-linejoin="round" stroke-linecap="round"/>
<polyline points="3.8,78.5 6.8,78.5 9.8,78.4 12.8,78.4 15.8,78.5 18.8,79.0 21.8,79.7 24.8,80.2 27.8,80.3 30.8,80.4 33.8,80.3 36.8,80.2 39.8,80.2 42.8,80.1 45.8,80.0 48.8,80.0 51.8,80.0 54.8,80.2 57.8,80.4 60.8,81.0 63.8,81.8 66.8,82.6 69.8,83.4 72.8,84.3 75.8,85.2 78.8,86.0 81.8,86.4 84.8,86.4 87.8,86.5 90.8,87.0 93.8,87.8 96.8,88.9 99.8,90.1 102.8,91.4 105.8,92.7 108.8,94.0 111.8,95.2 114.8,96.5 117.8,98.2 120.8,100.6 123.8,103.6 126.8,106.8 129.8,110.1 132.8,113.6 135.8,117.1 138.8,120.2 141.8,122.6 144.8,124.7 147.8,126.5 150.8,128.1 153.8,129.7 156.8,131.4 159.8,133.2 162.8,135.1 165.8,136.9 168.8,138.8 171.8,140.6 174.8,142.4 177.8,144.1 180.8,145.5 183.8,146.9 186.8,148.3 189.8,149.9 192.8,151.7 195.8,153.6 198.8,155.6 201.8,157.6 204.8,159.6 207.8,161.6 210.8,163.5 213.8,165.3 216.8,166.9 219.8,168.5 222.8,169.9 225.8,171.2 228.8,172.5 231.8,173.8 234.8,175.1 237.8,176.4 240.8,177.9 243.8,179.4 246.8,181.0 249.8,182.7 252.8,184.3 255.8,185.9 258.8,187.4 261.8,188.7 264.8,189.9 267.8,190.9 270.8,191.7 273.8,192.4 276.8,193.0 279.8,193.5 282.8,194.0 285.8,194.4 288.8,194.8 291.8,195.2 294.8,195.6 297.8,195.9 300.8,196.1 303.8,196.3 306.8,196.6 309.8,196.9 312.8,197.2 315.8,197.6 318.8,198.2 321.8,198.9 324.8,199.7 327.8,200.5 330.8,201.2 333.8,201.8 336.8,202.5 339.8,203.1 342.8,203.7 345.8,204.1 348.8,204.4 351.8,204.6 354.8,204.7 357.8,204.9 360.8,205.1 363.8,205.4 366.8,205.9 369.8,206.5 372.8,207.1 375.8,207.7 378.8,208.4 381.8,209.1 384.8,209.8 387.8,210.6 390.8,211.4 393.8,212.3 396.8,213.2 399.8,214.2 402.8,215.2 405.8,216.3 408.8,217.6 411.8,219.1 414.8,220.7 417.8,222.5 420.8,224.2 423.8,225.9 426.8,227.4 429.8,228.7 432.8,229.8 435.8,230.8 438.8,231.9 441.8,232.8 444.8,233.8 447.8,234.7 450.8,235.5 453.8,236.3 456.8,237.0 459.8,237.7 462.8,238.3 465.8,238.9 468.8,239.3 471.8,239.4 474.8,239.5 477.8,239.5 480.8,239.4 483.8,239.5 486.8,239.6 489.8,240.0 492.8,240.5 495.8,241.1 498.8,242.0 501.8,243.2 504.8,244.8 507.8,246.8 510.8,249.0 513.8,251.3 516.8,253.8 519.8,256.3 522.8,258.9 525.8,261.4 528.8,264.0 531.8,266.4 534.8,268.9 537.8,271.4 540.8,273.8 543.8,276.3 546.8,278.9 549.8,281.4 552.8,284.0 555.8,286.7 558.8,289.4 561.8,292.2 564.8,295.1 567.8,298.0 570.8,300.9 573.8,303.8 576.8,306.8 579.8,309.9 582.8,313.0 585.8,315.6 588.8,318.1 591.8,320.4 594.8,322.6 597.8,324.6 600.8,326.4 603.8,328.1 606.8,329.8 609.8,331.4 612.8,332.9 615.8,334.4 618.8,335.7 621.8,336.9 624.8,337.9 627.8,338.8 630.8,339.5 633.8,340.1 636.8,340.6 639.8,340.9 642.8,341.2 645.8,341.5 648.8,341.7 651.8,341.8 654.8,341.9 657.8,341.9 660.8,341.8 663.8,341.7 666.8,341.5 669.8,341.3 672.8,341.1 675.8,341.0 678.8,340.7 681.8,340.4 684.8,340.1 687.8,339.8 690.8,339.5 693.8,339.2 696.8,338.9 699.8,338.8 702.8,338.6 705.8,338.6 708.8,338.5 711.8,338.5 714.8,338.5 717.8,338.6 720.8,338.6 723.8,338.7 726.8,338.8 729.8,338.9 732.8,339.0 735.8,339.1 738.8,339.3 741.8,339.6 744.8,340.0 747.8,340.6 750.8,341.6 753.8,342.7 756.8,343.4 759.8,344.1 762.8,344.7 765.8,345.3 768.8,345.9 771.8,346.6 774.8,347.3 777.8,348.1 780.8,349.0 783.8,349.9 786.8,350.8 789.8,351.8 792.8,352.9 795.8,354.0 798.8,355.4 801.8,356.9 804.8,358.6 807.8,360.6 810.8,363.0 813.8,365.6 816.8,368.3 819.8,371.1 822.8,373.9 825.8,376.6 828.8,379.0 831.8,381.3 834.8,383.4 837.8,385.5 840.8,387.4 843.8,389.3 846.8,391.2 849.8,392.9 852.8,394.7 855.8,396.4 858.8,398.2 861.8,399.9 864.8,401.5 867.8,403.1 870.8,404.7 873.8,406.1 876.8,407.5 879.8,408.7 882.8,409.7 885.8,410.6 888.8,411.5 891.8,412.2 894.8,412.8 897.8,413.4 900.8,413.9 903.8,414.3 906.8,414.7 909.8,414.9 912.8,414.9 915.8,414.7 918.8,414.6 921.8,414.4 924.8,414.0 927.8,413.5 930.8,413.0 931.0,413.0" fill="none" stroke="#0f9a44" stroke-width="1.7" stroke-linejoin="round" stroke-linecap="round"/>
<polyline points="3.8,94.9 7.9,94.3 12.1,93.1 16.3,91.3 20.5,92.3 24.7,92.7 28.9,92.6 33.1,91.8 37.3,90.4 41.5,89.8 45.7,88.8 49.9,88.7 54.1,89.3 58.3,89.3 62.5,89.3 66.7,91.0 70.9,94.0 75.1,95.0 79.3,97.3 83.5,99.4 87.7,99.1 91.9,99.5 96.1,101.5 100.3,104.9 104.5,109.3 108.7,114.1 112.9,117.5 117.1,122.1 121.3,128.1 125.5,136.8 129.7,145.2 133.9,157.2 138.1,165.7 142.3,170.7 146.4,174.0 150.6,177.9 154.8,180.6 159.0,182.4 163.2,183.6 167.4,185.5 171.6,189.7 175.8,194.6 180.0,196.5 184.2,197.6 188.4,198.5 192.6,199.4 196.8,201.8 201.0,203.7 205.2,208.5 209.4,211.8 213.6,213.5 217.8,214.8 222.0,214.0 226.2,215.1 230.4,219.0 234.6,223.6 238.8,225.1 243.0,227.6 247.2,230.3 251.4,234.0 255.6,235.5 259.8,235.3 264.0,234.4 268.2,234.7 272.4,233.8 276.6,231.6 280.8,230.0 284.9,228.9 289.1,227.5 293.3,225.9 297.5,224.2 301.7,222.0 305.9,221.1 310.1,219.2 314.3,217.5 318.5,216.9 322.7,218.3 326.9,219.9 331.1,221.1 335.3,223.6 339.5,223.5 343.7,223.7 347.9,224.4 352.1,225.2 356.3,224.7 360.5,224.1 364.7,223.3 368.9,224.2 373.1,226.8 377.3,228.6 381.5,231.6 385.7,232.9 389.9,232.9 394.1,233.2 398.3,233.9 402.5,234.6 406.7,236.6 410.9,240.3 415.1,244.1 419.3,247.6 423.4,253.0 427.6,255.3 431.8,257.6 436.0,258.7 440.2,259.5 444.4,261.6 448.6,261.3 452.8,260.9 457.0,262.3 461.2,263.6 465.4,264.6 469.6,264.4 473.8,262.6 478.0,260.2 482.2,259.2 486.4,257.7 490.6,258.4 494.8,259.2 499.0,259.8 503.2,262.3 507.4,268.4 511.6,274.3 515.8,281.9 520.0,288.6 524.2,295.0 528.4,303.1 532.6,309.6 536.8,318.7 541.0,328.2 545.2,334.3 549.4,338.1 553.6,340.7 557.8,345.2 562.0,351.4 566.1,358.3 570.3,364.9 574.5,368.7 578.7,374.5 582.9,377.8 587.1,380.1 591.3,382.5 595.5,385.9 599.7,388.3 603.9,390.8 608.1,392.8 612.3,392.3 616.5,392.1 620.7,391.3 624.9,389.4 629.1,388.5 633.3,387.1 637.5,385.4 641.7,384.0 645.9,381.7 650.1,378.9 654.3,376.3 658.5,374.6 662.7,371.9 666.9,369.1 671.1,365.5 675.3,362.2 679.5,358.7 683.7,356.7 687.9,352.8 692.1,349.1 696.3,345.6 700.5,343.3 704.6,341.3 708.8,340.3 713.0,341.0 717.2,342.8 721.4,343.7 725.6,343.3 729.8,342.8 734.0,344.9 738.2,345.5 742.4,345.1 746.6,347.4 750.8,349.8 755.0,352.2 759.2,354.0 763.4,357.2 767.6,359.8 771.8,358.9 776.0,360.0 780.2,361.4 784.4,363.8 788.6,367.1 792.8,369.7 797.0,372.9 801.2,376.4 805.4,381.7 809.6,389.6 813.8,396.8 818.0,405.7 822.2,413.7 826.4,421.5 830.6,426.0 834.8,430.0 839.0,432.4 843.1,434.6 847.3,438.9 851.5,442.1 855.7,446.9 859.9,448.9 864.1,450.4 868.3,451.3 872.5,451.8 876.7,453.2 880.9,454.5 885.1,454.8 889.3,455.1 893.5,454.5 897.7,452.3 901.9,451.2 906.1,449.2 910.3,445.2 914.5,441.5 918.7,438.6 922.9,435.1 927.1,430.8 931.3,426.9" fill="none" stroke="#f2a80e" stroke-width="2.5" stroke-linejoin="round" stroke-linecap="round"/>
<polyline points="3.8,90.4 7.9,90.0 12.1,88.5 16.3,86.0 20.5,88.9 24.7,90.2 28.9,90.5 33.1,89.4 37.3,87.1 41.5,86.6 45.7,85.3 49.9,85.7 54.1,87.4 58.3,87.6 62.5,88.0 66.7,91.4 70.9,97.1 75.1,98.4 79.3,102.2 83.5,105.3 87.7,103.7 91.9,103.6 96.1,106.8 100.3,112.3 104.5,119.3 108.7,126.6 112.9,130.9 117.1,137.2 121.3,145.9 125.5,159.4 129.7,171.3 133.9,189.5 138.1,199.8 142.3,203.1 146.4,203.4 150.6,205.5 154.8,205.7 159.0,204.6 163.2,202.9 167.4,203.0 171.6,207.7 175.8,213.8 180.0,214.0 184.2,212.8 188.4,211.9 192.6,211.1 196.8,213.6 201.0,215.0 205.2,222.3 209.4,225.9 213.6,226.7 217.8,226.7 222.0,223.0 226.2,223.5 230.4,229.4 234.6,236.4 238.8,236.8 243.0,239.4 247.2,242.5 251.4,247.3 255.6,247.8 259.8,245.1 264.0,241.7 268.2,240.9 272.4,238.0 276.6,233.2 280.8,229.9 284.9,227.6 289.1,225.3 293.3,222.6 297.5,219.9 301.7,216.5 305.9,215.8 310.1,213.1 314.3,211.0 318.5,211.0 322.7,214.9 326.9,218.5 331.1,221.0 335.3,225.9 339.5,225.2 343.7,225.2 347.9,226.3 352.1,227.5 356.3,226.1 360.5,224.8 364.7,223.0 368.9,224.8 373.1,229.6 377.3,232.6 381.5,237.5 385.7,239.1 389.9,237.9 394.1,237.6 398.3,238.0 402.5,238.6 406.7,241.8 410.9,247.8 415.1,253.7 419.3,258.7 423.4,266.9 427.6,268.8 431.8,270.9 436.0,270.5 440.2,269.9 444.4,272.0 448.6,269.6 452.8,267.2 457.0,268.8 461.2,270.2 465.4,270.8 469.6,269.3 473.8,264.9 478.0,259.9 482.2,258.1 486.4,255.5 490.6,257.2 494.8,258.9 499.0,260.2 503.2,264.9 507.4,276.1 511.6,285.9 515.8,298.2 520.0,308.1 524.2,316.8 528.4,328.3 532.6,336.1 536.8,348.6 541.0,361.4 545.2,367.0 549.4,368.3 553.6,367.7 557.8,371.5 562.0,378.5 566.1,386.7 570.3,394.1 574.5,396.1 578.7,402.3 582.9,403.5 587.1,403.2 591.3,403.5 595.5,406.3 599.7,407.2 603.9,408.4 608.1,409.0 612.3,405.1 616.5,402.4 620.7,399.0 624.9,393.9 629.1,391.4 633.3,388.2 637.5,384.9 641.7,382.2 645.9,378.1 650.1,373.5 654.3,369.4 658.5,367.5 662.7,363.6 666.9,359.8 671.1,354.6 675.3,350.4 679.5,345.7 683.7,344.2 687.9,339.2 692.1,334.5 696.3,330.4 700.5,328.8 704.6,327.6 708.8,328.3 713.0,331.8 717.2,336.9 721.4,339.7 725.6,339.6 729.8,339.4 734.0,344.1 738.2,345.4 742.4,344.6 746.6,349.0 750.8,353.3 755.0,357.3 759.2,359.9 763.4,364.9 767.6,368.3 771.8,365.2 776.0,366.1 780.2,367.7 784.4,371.1 788.6,376.1 792.8,379.3 797.0,383.8 801.2,388.5 805.4,396.3 809.6,408.8 813.8,419.0 818.0,431.9 822.2,442.5 826.4,452.3 830.6,455.3 834.8,457.5 839.0,457.0 843.1,456.9 847.3,460.9 851.5,463.0 855.7,468.4 859.9,468.3 864.1,467.7 868.3,466.3 872.5,464.5 876.7,464.8 880.9,465.3 885.1,463.9 889.3,462.7 893.5,460.2 897.7,454.9 901.9,452.4 906.1,448.3 910.3,440.9 914.5,434.6 918.7,430.4 922.9,425.1 927.1,418.7 931.3,413.6" fill="none" stroke="#1420a4" stroke-width="1.6" stroke-linejoin="round" stroke-linecap="round"/>
<polyline points="3.8,85.4 7.9,86.3 12.1,84.9 16.3,81.4 20.5,88.3 24.7,90.9 28.9,91.3 33.1,88.9 37.3,84.9 41.5,84.7 45.7,83.0 49.9,84.5 54.1,88.0 58.3,88.2 62.5,88.6 66.7,94.7 70.9,104.0 75.1,104.1 79.3,109.2 83.5,112.6 87.7,107.2 91.9,105.8 96.1,110.9 100.3,119.6 104.5,130.0 108.7,139.9 112.9,143.3 117.1,150.7 121.3,162.1 125.5,181.4 129.7,196.0 133.9,221.1 138.1,229.5 142.3,225.6 146.4,218.8 150.6,217.5 154.8,213.8 159.0,209.2 163.2,204.4 167.4,204.2 171.6,212.4 175.8,222.0 180.0,219.7 184.2,215.6 188.4,212.9 192.6,211.1 196.8,215.7 201.0,217.6 205.2,230.1 209.4,234.2 213.6,232.8 217.8,230.9 222.0,222.7 226.2,223.6 230.4,234.5 234.6,245.5 238.8,243.2 243.0,245.9 247.2,249.4 251.4,255.9 255.6,253.9 259.8,247.0 264.0,240.1 268.2,239.2 272.4,234.5 276.6,226.7 280.8,222.8 284.9,221.0 289.1,219.0 293.3,216.2 297.5,213.3 301.7,209.3 305.9,210.4 310.1,207.3 314.3,205.3 318.5,207.2 322.7,215.6 326.9,222.1 331.1,225.5 335.3,232.8 339.5,229.4 343.7,227.9 347.9,229.1 352.1,230.2 356.3,226.8 360.5,224.1 364.7,221.1 368.9,225.1 373.1,233.8 377.3,237.9 381.5,245.1 385.7,245.4 389.9,241.1 394.1,239.5 398.3,239.7 402.5,240.2 406.7,245.5 410.9,255.4 415.1,263.6 419.3,269.5 423.4,280.9 427.6,279.8 431.8,279.8 436.0,276.1 440.2,273.3 444.4,275.9 448.6,270.2 452.8,265.6 457.0,269.1 461.2,271.5 465.4,272.2 469.6,269.0 473.8,261.0 478.0,253.2 482.2,252.1 486.4,249.3 490.6,254.5 494.8,258.4 499.0,261.0 503.2,269.4 507.4,288.3 511.6,302.2 515.8,319.4 520.0,330.4 524.2,339.0 528.4,352.7 532.6,358.9 536.8,374.3 541.0,389.1 545.2,390.2 549.4,384.7 553.6,378.2 557.8,381.7 562.0,391.1 566.1,402.0 570.3,410.5 574.5,408.7 578.7,415.8 582.9,413.4 587.1,409.6 591.3,408.1 595.5,411.6 599.7,411.5 603.9,412.3 608.1,412.2 612.3,403.9 616.5,399.3 620.7,394.1 624.9,386.5 629.1,384.3 633.3,380.8 637.5,377.2 641.7,374.8 645.9,369.9 650.1,364.1 654.3,359.8 658.5,359.5 662.7,355.1 666.9,350.9 671.1,344.3 675.3,340.0 679.5,335.0 683.7,335.8 687.9,329.3 692.1,324.1 696.3,320.1 700.5,320.5 704.6,321.1 708.8,324.5 713.0,332.2 717.2,341.5 721.4,345.1 725.6,343.0 729.8,341.6 734.0,349.4 738.2,350.0 742.4,347.1 746.6,354.3 750.8,360.4 755.0,365.4 759.2,367.4 763.4,374.1 767.6,377.3 771.8,368.6 776.0,369.1 780.2,371.1 784.4,376.1 788.6,383.7 792.8,387.0 797.0,392.6 801.2,398.4 805.4,409.3 809.6,427.9 813.8,440.3 818.0,456.8 822.2,467.9 826.4,477.3 830.6,474.5 834.8,472.2 839.0,466.4 843.1,463.0 847.3,468.4 851.5,469.7 855.7,477.3 859.9,474.2 864.1,471.1 868.3,467.4 872.5,463.7 876.7,464.5 880.9,465.5 885.1,462.9 889.3,461.1 893.5,457.0 897.7,448.4 901.9,446.0 906.1,440.7 910.3,429.6 914.5,421.8 918.7,418.3 922.9,412.6 927.1,405.1 931.3,400.2" fill="none" stroke="#e61ec8" stroke-width="1.35" stroke-linejoin="round" stroke-linecap="round"/>
<line x1="3.75" y1="82.5" x2="3.75" y2="95" stroke="#e8200e" stroke-width="1" stroke-opacity="0.85"/>
<rect x="2.45" y="89.4" width="2.6" height="2.5" fill="#e8200e"/>
<line x1="7.95" y1="86.9" x2="7.95" y2="96.9" stroke="#e8200e" stroke-width="1" stroke-opacity="0.85"/>
<rect x="6.65" y="88" width="2.6" height="5" fill="#e8200e"/>
<line x1="12.14" y1="73.75" x2="12.14" y2="83" stroke="#1a62d2" stroke-width="1" stroke-opacity="0.85"/>
<rect x="10.84" y="76.25" width="2.6" height="5.75" fill="#1a62d2"/>
<line x1="16.34" y1="73.75" x2="16.34" y2="92" stroke="#e8200e" stroke-width="1" stroke-opacity="0.85"/>
<rect x="15.04" y="74.4" width="2.6" height="16.85" fill="#e8200e"/>
<line x1="20.54" y1="82" x2="20.54" y2="102.5" stroke="#1a62d2" stroke-width="1" stroke-opacity="0.85"/>
<rect x="19.24" y="82.5" width="2.6" height="19.5" fill="#1a62d2"/>
<line x1="24.73" y1="90.6" x2="24.73" y2="105.6" stroke="#1a62d2" stroke-width="1" stroke-opacity="0.85"/>
<rect x="23.43" y="92.5" width="2.6" height="3.75" fill="#1a62d2"/>
<line x1="28.93" y1="83" x2="28.93" y2="95" stroke="#1a62d2" stroke-width="1" stroke-opacity="0.85"/>
<rect x="27.63" y="86.25" width="2.6" height="5.75" fill="#1a62d2"/>
<line x1="33.13" y1="83" x2="33.13" y2="93" stroke="#e8200e" stroke-width="1" stroke-opacity="0.85"/>
<rect x="31.83" y="84" width="2.6" height="5" fill="#e8200e"/>
<line x1="37.33" y1="71.25" x2="37.33" y2="80" stroke="#e8200e" stroke-width="1" stroke-opacity="0.85"/>
<rect x="36.03" y="77" width="2.6" height="2.4" fill="#e8200e"/>
<line x1="41.52" y1="76" x2="41.52" y2="85" stroke="#1a62d2" stroke-width="1" stroke-opacity="0.85"/>
<rect x="40.22" y="77" width="2.6" height="7.4" fill="#1a62d2"/>
<line x1="45.72" y1="77.5" x2="45.72" y2="88" stroke="#e8200e" stroke-width="1" stroke-opacity="0.85"/>
<rect x="44.42" y="79.4" width="2.6" height="4.35" fill="#e8200e"/>
<line x1="49.92" y1="80" x2="49.92" y2="88" stroke="#1a62d2" stroke-width="1" stroke-opacity="0.85"/>
<rect x="48.62" y="82" width="2.6" height="5.5" fill="#1a62d2"/>
<line x1="54.11" y1="81" x2="54.11" y2="96" stroke="#1a62d2" stroke-width="1" stroke-opacity="0.85"/>
<rect x="52.81" y="83" width="2.6" height="12" fill="#1a62d2"/>
<line x1="58.31" y1="78" x2="58.31" y2="94.4" stroke="#1a62d2" stroke-width="1" stroke-opacity="0.85"/>
<rect x="57.01" y="83" width="2.6" height="5.75" fill="#1a62d2"/>
<line x1="62.51" y1="86" x2="62.51" y2="97" stroke="#1a62d2" stroke-width="1" stroke-opacity="0.85"/>
<rect x="61.21" y="87" width="2.6" height="2.4" fill="#1a62d2"/>
<line x1="66.7" y1="90.6" x2="66.7" y2="114.4" stroke="#1a62d2" stroke-width="1" stroke-opacity="0.85"/>
<rect x="65.41" y="91.25" width="2.6" height="15.75" fill="#1a62d2"/>
<line x1="70.9" y1="106" x2="70.9" y2="125.6" stroke="#1a62d2" stroke-width="1" stroke-opacity="0.85"/>
<rect x="69.6" y="119.4" width="2.6" height="3.1" fill="#1a62d2"/>
<line x1="75.1" y1="103.75" x2="75.1" y2="116.5" stroke="#e8200e" stroke-width="1" stroke-opacity="0.85"/>
<rect x="73.8" y="104.4" width="2.6" height="11.85" fill="#e8200e"/>
<line x1="79.3" y1="107.5" x2="79.3" y2="127" stroke="#1a62d2" stroke-width="1" stroke-opacity="0.85"/>
<rect x="78.0" y="108" width="2.6" height="11.4" fill="#1a62d2"/>
<line x1="83.49" y1="112" x2="83.49" y2="127.5" stroke="#1a62d2" stroke-width="1" stroke-opacity="0.85"/>
<rect x="82.19" y="117" width="2.6" height="2.4" fill="#1a62d2"/>
<line x1="87.69" y1="95.6" x2="87.69" y2="108.75" stroke="#e8200e" stroke-width="1" stroke-opacity="0.85"/>
<rect x="86.39" y="96.25" width="2.6" height="11.75" fill="#e8200e"/>
<line x1="91.89" y1="92" x2="91.89" y2="103.75" stroke="#1a62d2" stroke-width="1" stroke-opacity="0.85"/>
<rect x="90.59" y="93" width="2.6" height="10" fill="#1a62d2"/>
<line x1="96.08" y1="111.25" x2="96.08" y2="125.6" stroke="#1a62d2" stroke-width="1" stroke-opacity="0.85"/>
<rect x="94.78" y="113.75" width="2.6" height="7.5" fill="#1a62d2"/>
<line x1="100.28" y1="123" x2="100.28" y2="144" stroke="#1a62d2" stroke-width="1" stroke-opacity="0.85"/>
<rect x="98.98" y="123.5" width="2.6" height="13.5" fill="#1a62d2"/>
<line x1="104.48" y1="131.3" x2="104.48" y2="153.75" stroke="#1a62d2" stroke-width="1" stroke-opacity="0.85"/>
<rect x="103.18" y="132.3" width="2.6" height="18.5" fill="#1a62d2"/>
<line x1="108.67" y1="151.8" x2="108.67" y2="166.4" stroke="#e8200e" stroke-width="1" stroke-opacity="0.85"/>
<rect x="107.38" y="159.6" width="2.6" height="2.4" fill="#e8200e"/>
<line x1="112.87" y1="149.8" x2="112.87" y2="166.4" stroke="#e8200e" stroke-width="1" stroke-opacity="0.85"/>
<rect x="111.57" y="150.2" width="2.6" height="10.4" fill="#e8200e"/>
<line x1="117.07" y1="157.7" x2="117.07" y2="173.3" stroke="#1a62d2" stroke-width="1" stroke-opacity="0.85"/>
<rect x="115.77" y="161.6" width="2.6" height="3.9" fill="#1a62d2"/>
<line x1="121.27" y1="167.4" x2="121.27" y2="190" stroke="#1a62d2" stroke-width="1" stroke-opacity="0.85"/>
<rect x="119.97" y="168.4" width="2.6" height="16.6" fill="#1a62d2"/>
<line x1="125.46" y1="185" x2="125.46" y2="228.75" stroke="#1a62d2" stroke-width="1" stroke-opacity="0.85"/>
<rect x="124.16" y="186.25" width="2.6" height="33.75" fill="#1a62d2"/>
<line x1="129.66" y1="207.5" x2="129.66" y2="226.25" stroke="#1a62d2" stroke-width="1" stroke-opacity="0.85"/>
<rect x="128.36" y="213.75" width="2.6" height="11.25" fill="#1a62d2"/>
<line x1="133.86" y1="223.75" x2="133.86" y2="272.5" stroke="#1a62d2" stroke-width="1" stroke-opacity="0.85"/>
<rect x="132.56" y="225" width="2.6" height="46.25" fill="#1a62d2"/>
<line x1="138.05" y1="245" x2="138.05" y2="283.75" stroke="#e8200e" stroke-width="1" stroke-opacity="0.85"/>
<rect x="136.75" y="246.25" width="2.6" height="23.75" fill="#e8200e"/>
<line x1="142.25" y1="212.5" x2="142.25" y2="226" stroke="#e8200e" stroke-width="1" stroke-opacity="0.85"/>
<rect x="140.95" y="218" width="2.6" height="1" fill="#e8200e"/>
<line x1="146.45" y1="204.5" x2="146.45" y2="225" stroke="#e8200e" stroke-width="1" stroke-opacity="0.85"/>
<rect x="145.15" y="205" width="2.6" height="18.75" fill="#e8200e"/>
<line x1="150.65" y1="205" x2="150.65" y2="217.5" stroke="#1a62d2" stroke-width="1" stroke-opacity="0.85"/>
<rect x="149.34" y="206" width="2.6" height="9" fill="#1a62d2"/>
<line x1="154.84" y1="191.25" x2="154.84" y2="208.75" stroke="#1a62d2" stroke-width="1" stroke-opacity="0.85"/>
<rect x="153.54" y="196.25" width="2.6" height="10.0" fill="#1a62d2"/>
<line x1="159.04" y1="193.75" x2="159.04" y2="203.75" stroke="#1a62d2" stroke-width="1" stroke-opacity="0.85"/>
<rect x="157.74" y="195" width="2.6" height="5" fill="#1a62d2"/>
<line x1="163.24" y1="186.25" x2="163.24" y2="200" stroke="#1a62d2" stroke-width="1" stroke-opacity="0.85"/>
<rect x="161.94" y="187.5" width="2.6" height="7.5" fill="#1a62d2"/>
<line x1="167.43" y1="197.5" x2="167.43" y2="212.5" stroke="#e8200e" stroke-width="1" stroke-opacity="0.85"/>
<rect x="166.13" y="203.75" width="2.6" height="7.5" fill="#e8200e"/>
<line x1="171.63" y1="218.75" x2="171.63" y2="236.25" stroke="#1a62d2" stroke-width="1" stroke-opacity="0.85"/>
<rect x="170.33" y="221.25" width="2.6" height="7.5" fill="#1a62d2"/>
<line x1="175.83" y1="222.5" x2="175.83" y2="247.5" stroke="#1a62d2" stroke-width="1" stroke-opacity="0.85"/>
<rect x="174.53" y="223.75" width="2.6" height="17.5" fill="#1a62d2"/>
<line x1="180.02" y1="213.75" x2="180.02" y2="225" stroke="#e8200e" stroke-width="1" stroke-opacity="0.85"/>
<rect x="178.72" y="215" width="2.6" height="7.5" fill="#e8200e"/>
<line x1="184.22" y1="195" x2="184.22" y2="225" stroke="#e8200e" stroke-width="1" stroke-opacity="0.85"/>
<rect x="182.92" y="207.5" width="2.6" height="7.5" fill="#e8200e"/>
<line x1="188.42" y1="206.25" x2="188.42" y2="225" stroke="#e8200e" stroke-width="1" stroke-opacity="0.85"/>
<rect x="187.12" y="207.5" width="2.6" height="16.25" fill="#e8200e"/>
<line x1="192.62" y1="206.25" x2="192.62" y2="233.75" stroke="#e8200e" stroke-width="1" stroke-opacity="0.85"/>
<rect x="191.31" y="207.5" width="2.6" height="18.75" fill="#e8200e"/>
<line x1="196.81" y1="216.25" x2="196.81" y2="235" stroke="#e8200e" stroke-width="1" stroke-opacity="0.85"/>
<rect x="195.51" y="225" width="2.6" height="3.75" fill="#e8200e"/>
<line x1="201.01" y1="215" x2="201.01" y2="228.75" stroke="#1a62d2" stroke-width="1" stroke-opacity="0.85"/>
<rect x="199.71" y="216.25" width="2.6" height="5.0" fill="#1a62d2"/>
<line x1="205.21" y1="233.75" x2="205.21" y2="257.5" stroke="#1a62d2" stroke-width="1" stroke-opacity="0.85"/>
<rect x="203.91" y="235" width="2.6" height="20" fill="#1a62d2"/>
<line x1="209.4" y1="233.75" x2="209.4" y2="247.5" stroke="#1a62d2" stroke-width="1" stroke-opacity="0.85"/>
<rect x="208.1" y="240" width="2.6" height="2.5" fill="#1a62d2"/>
<line x1="213.6" y1="229" x2="213.6" y2="251" stroke="#e8200e" stroke-width="1" stroke-opacity="0.85"/>
<rect x="212.3" y="230" width="2.6" height="18.75" fill="#e8200e"/>
<line x1="217.8" y1="222" x2="217.8" y2="234" stroke="#e8200e" stroke-width="1" stroke-opacity="0.85"/>
<rect x="216.5" y="227" width="2.6" height="4.5" fill="#e8200e"/>
<line x1="221.99" y1="205.5" x2="221.99" y2="217.5" stroke="#e8200e" stroke-width="1" stroke-opacity="0.85"/>
<rect x="220.69" y="206.25" width="2.6" height="10.0" fill="#e8200e"/>
<line x1="226.19" y1="212" x2="226.19" y2="230" stroke="#1a62d2" stroke-width="1" stroke-opacity="0.85"/>
<rect x="224.89" y="212.8" width="2.6" height="12.7" fill="#1a62d2"/>
<line x1="230.39" y1="238.75" x2="230.39" y2="258.75" stroke="#1a62d2" stroke-width="1" stroke-opacity="0.85"/>
<rect x="229.09" y="240" width="2.6" height="16.25" fill="#1a62d2"/>
<line x1="234.59" y1="256.25" x2="234.59" y2="277.5" stroke="#e8200e" stroke-width="1" stroke-opacity="0.85"/>
<rect x="233.28" y="267.5" width="2.6" height="3.0" fill="#e8200e"/>
<line x1="238.78" y1="237.5" x2="238.78" y2="250" stroke="#e8200e" stroke-width="1" stroke-opacity="0.85"/>
<rect x="237.48" y="238.75" width="2.6" height="10.0" fill="#e8200e"/>
<line x1="242.98" y1="245" x2="242.98" y2="256.25" stroke="#1a62d2" stroke-width="1" stroke-opacity="0.85"/>
<rect x="241.68" y="246.25" width="2.6" height="5.0" fill="#1a62d2"/>
<line x1="247.18" y1="247.5" x2="247.18" y2="263.75" stroke="#1a62d2" stroke-width="1" stroke-opacity="0.85"/>
<rect x="245.88" y="251.25" width="2.6" height="5.0" fill="#1a62d2"/>
<line x1="251.37" y1="258" x2="251.37" y2="272" stroke="#1a62d2" stroke-width="1" stroke-opacity="0.85"/>
<rect x="250.07" y="264.2" width="2.6" height="4.8" fill="#1a62d2"/>
<line x1="255.57" y1="248.75" x2="255.57" y2="264.4" stroke="#e8200e" stroke-width="1" stroke-opacity="0.85"/>
<rect x="254.27" y="250" width="2.6" height="4" fill="#e8200e"/>
<line x1="259.77" y1="223" x2="259.77" y2="234" stroke="#1a62d2" stroke-width="1" stroke-opacity="0.85"/>
<rect x="258.47" y="228.4" width="2.6" height="4.6" fill="#1a62d2"/>
<line x1="263.96" y1="223.75" x2="263.96" y2="235" stroke="#e8200e" stroke-width="1" stroke-opacity="0.85"/>
<rect x="262.66" y="226.25" width="2.6" height="7.5" fill="#e8200e"/>
<line x1="268.16" y1="220" x2="268.16" y2="238.75" stroke="#1a62d2" stroke-width="1" stroke-opacity="0.85"/>
<rect x="266.86" y="221.25" width="2.6" height="16.25" fill="#1a62d2"/>
<line x1="272.36" y1="223.75" x2="272.36" y2="237.5" stroke="#e8200e" stroke-width="1" stroke-opacity="0.85"/>
<rect x="271.06" y="225" width="2.6" height="12.5" fill="#e8200e"/>
<line x1="276.56" y1="208.75" x2="276.56" y2="220" stroke="#e8200e" stroke-width="1" stroke-opacity="0.85"/>
<rect x="275.25" y="211.25" width="2.6" height="6.25" fill="#e8200e"/>
<line x1="280.75" y1="213.75" x2="280.75" y2="226.25" stroke="#e8200e" stroke-width="1" stroke-opacity="0.85"/>
<rect x="279.45" y="215" width="2.6" height="8.75" fill="#e8200e"/>
<line x1="284.95" y1="208.75" x2="284.95" y2="220" stroke="#1a62d2" stroke-width="1" stroke-opacity="0.85"/>
<rect x="283.65" y="210" width="2.6" height="7.5" fill="#1a62d2"/>
<line x1="289.15" y1="211.25" x2="289.15" y2="226.9" stroke="#e8200e" stroke-width="1" stroke-opacity="0.85"/>
<rect x="287.85" y="215" width="2.6" height="8" fill="#e8200e"/>
<line x1="293.34" y1="203.4" x2="293.34" y2="214.4" stroke="#1a62d2" stroke-width="1" stroke-opacity="0.85"/>
<rect x="292.04" y="206.5" width="2.6" height="4.0" fill="#1a62d2"/>
<line x1="297.54" y1="200" x2="297.54" y2="212.5" stroke="#1a62d2" stroke-width="1" stroke-opacity="0.85"/>
<rect x="296.24" y="201.25" width="2.6" height="6.25" fill="#1a62d2"/>
<line x1="301.74" y1="197.5" x2="301.74" y2="211.25" stroke="#e8200e" stroke-width="1" stroke-opacity="0.85"/>
<rect x="300.44" y="201.25" width="2.6" height="8.75" fill="#e8200e"/>
<line x1="305.93" y1="206.25" x2="305.93" y2="213.75" stroke="#1a62d2" stroke-width="1" stroke-opacity="0.85"/>
<rect x="304.63" y="207.5" width="2.6" height="5.0" fill="#1a62d2"/>
<line x1="310.13" y1="200" x2="310.13" y2="218.75" stroke="#e8200e" stroke-width="1" stroke-opacity="0.85"/>
<rect x="308.83" y="201.25" width="2.6" height="15.0" fill="#e8200e"/>
<line x1="314.33" y1="196.25" x2="314.33" y2="203.75" stroke="#1a62d2" stroke-width="1" stroke-opacity="0.85"/>
<rect x="313.03" y="197.5" width="2.6" height="3.75" fill="#1a62d2"/>
<line x1="318.52" y1="206.5" x2="318.52" y2="215" stroke="#1a62d2" stroke-width="1" stroke-opacity="0.85"/>
<rect x="317.22" y="208" width="2.6" height="3" fill="#1a62d2"/>
<line x1="322.72" y1="221.25" x2="322.72" y2="233.75" stroke="#1a62d2" stroke-width="1" stroke-opacity="0.85"/>
<rect x="321.42" y="222.5" width="2.6" height="10.0" fill="#1a62d2"/>
<line x1="326.92" y1="225" x2="326.92" y2="237.5" stroke="#1a62d2" stroke-width="1" stroke-opacity="0.85"/>
<rect x="325.62" y="226.25" width="2.6" height="8.75" fill="#1a62d2"/>
<line x1="331.12" y1="226.9" x2="331.12" y2="238.6" stroke="#e8200e" stroke-width="1" stroke-opacity="0.85"/>
<rect x="329.82" y="232.3" width="2.6" height="4.7" fill="#e8200e"/>
<line x1="335.31" y1="240" x2="335.31" y2="251" stroke="#1a62d2" stroke-width="1" stroke-opacity="0.85"/>
<rect x="334.01" y="242.5" width="2.6" height="5.0" fill="#1a62d2"/>
<line x1="339.51" y1="221" x2="339.51" y2="243.75" stroke="#e8200e" stroke-width="1" stroke-opacity="0.85"/>
<rect x="338.21" y="222.5" width="2.6" height="18.75" fill="#e8200e"/>
<line x1="343.71" y1="220" x2="343.71" y2="226" stroke="#1a62d2" stroke-width="1" stroke-opacity="0.85"/>
<rect x="342.41" y="221" width="2.6" height="4" fill="#1a62d2"/>
<line x1="347.9" y1="226.9" x2="347.9" y2="237.8" stroke="#e8200e" stroke-width="1" stroke-opacity="0.85"/>
<rect x="346.6" y="231.5" width="2.6" height="1.5" fill="#e8200e"/>
<line x1="352.1" y1="230" x2="352.1" y2="240" stroke="#e8200e" stroke-width="1" stroke-opacity="0.85"/>
<rect x="350.8" y="232.5" width="2.6" height="6.25" fill="#e8200e"/>
<line x1="356.3" y1="218.75" x2="356.3" y2="228.75" stroke="#e8200e" stroke-width="1" stroke-opacity="0.85"/>
<rect x="355.0" y="220" width="2.6" height="8.75" fill="#e8200e"/>
<line x1="360.5" y1="217.5" x2="360.5" y2="228.75" stroke="#e8200e" stroke-width="1" stroke-opacity="0.85"/>
<rect x="359.19" y="218.75" width="2.6" height="6.25" fill="#e8200e"/>
<line x1="364.69" y1="211.25" x2="364.69" y2="218.75" stroke="#e8200e" stroke-width="1" stroke-opacity="0.85"/>
<rect x="363.39" y="215" width="2.6" height="2.5" fill="#e8200e"/>
<line x1="368.89" y1="226.25" x2="368.89" y2="235" stroke="#1a62d2" stroke-width="1" stroke-opacity="0.85"/>
<rect x="367.59" y="232" width="2.6" height="1" fill="#1a62d2"/>
<line x1="373.09" y1="240" x2="373.09" y2="252.5" stroke="#1a62d2" stroke-width="1" stroke-opacity="0.85"/>
<rect x="371.79" y="240" width="2.6" height="11.25" fill="#1a62d2"/>
<line x1="377.28" y1="240" x2="377.28" y2="248.75" stroke="#1a62d2" stroke-width="1" stroke-opacity="0.85"/>
<rect x="375.98" y="241.25" width="2.6" height="5.0" fill="#1a62d2"/>
<line x1="381.48" y1="258.75" x2="381.48" y2="271.25" stroke="#e8200e" stroke-width="1" stroke-opacity="0.85"/>
<rect x="380.18" y="259.5" width="2.6" height="5.5" fill="#e8200e"/>
<line x1="385.68" y1="245" x2="385.68" y2="261" stroke="#e8200e" stroke-width="1" stroke-opacity="0.85"/>
<rect x="384.38" y="246" width="2.6" height="6" fill="#e8200e"/>
<line x1="389.87" y1="231.25" x2="389.87" y2="247.5" stroke="#e8200e" stroke-width="1" stroke-opacity="0.85"/>
<rect x="388.57" y="232.5" width="2.6" height="13.75" fill="#e8200e"/>
<line x1="394.07" y1="235" x2="394.07" y2="246.25" stroke="#e8200e" stroke-width="1" stroke-opacity="0.85"/>
<rect x="392.77" y="236.25" width="2.6" height="10.0" fill="#e8200e"/>
<line x1="398.27" y1="228.75" x2="398.27" y2="241.25" stroke="#1a62d2" stroke-width="1" stroke-opacity="0.85"/>
<rect x="396.97" y="233.75" width="2.6" height="6.25" fill="#1a62d2"/>
<line x1="402.47" y1="231.25" x2="402.47" y2="246.25" stroke="#1a62d2" stroke-width="1" stroke-opacity="0.85"/>
<rect x="401.17" y="233.75" width="2.6" height="7.5" fill="#1a62d2"/>
<line x1="406.66" y1="252.5" x2="406.66" y2="261.25" stroke="#1a62d2" stroke-width="1" stroke-opacity="0.85"/>
<rect x="405.36" y="253.75" width="2.6" height="2.5" fill="#1a62d2"/>
<line x1="410.86" y1="255" x2="410.86" y2="276.25" stroke="#1a62d2" stroke-width="1" stroke-opacity="0.85"/>
<rect x="409.56" y="261.25" width="2.6" height="13.75" fill="#1a62d2"/>
<line x1="415.06" y1="277.5" x2="415.06" y2="302.5" stroke="#e8200e" stroke-width="1" stroke-opacity="0.85"/>
<rect x="413.76" y="280" width="2.6" height="3.75" fill="#e8200e"/>
<line x1="419.25" y1="280" x2="419.25" y2="290" stroke="#e8200e" stroke-width="1" stroke-opacity="0.85"/>
<rect x="417.95" y="281.25" width="2.6" height="5.0" fill="#e8200e"/>
<line x1="423.45" y1="282.5" x2="423.45" y2="305" stroke="#1a62d2" stroke-width="1" stroke-opacity="0.85"/>
<rect x="422.15" y="293.75" width="2.6" height="10.0" fill="#1a62d2"/>
<line x1="427.65" y1="276.25" x2="427.65" y2="296.25" stroke="#e8200e" stroke-width="1" stroke-opacity="0.85"/>
<rect x="426.35" y="277.5" width="2.6" height="16.25" fill="#e8200e"/>
<line x1="431.84" y1="265" x2="431.84" y2="282.5" stroke="#1a62d2" stroke-width="1" stroke-opacity="0.85"/>
<rect x="430.54" y="266.25" width="2.6" height="13.75" fill="#1a62d2"/>
<line x1="436.04" y1="267.5" x2="436.04" y2="277.5" stroke="#e8200e" stroke-width="1" stroke-opacity="0.85"/>
<rect x="434.74" y="268.75" width="2.6" height="8.75" fill="#e8200e"/>
<line x1="440.24" y1="256.25" x2="440.24" y2="268.75" stroke="#1a62d2" stroke-width="1" stroke-opacity="0.85"/>
<rect x="438.94" y="261.25" width="2.6" height="6.25" fill="#1a62d2"/>
<line x1="444.44" y1="278.75" x2="444.44" y2="293.75" stroke="#e8200e" stroke-width="1" stroke-opacity="0.85"/>
<rect x="443.13" y="281.25" width="2.6" height="8.75" fill="#e8200e"/>
<line x1="448.63" y1="257.5" x2="448.63" y2="277.5" stroke="#e8200e" stroke-width="1" stroke-opacity="0.85"/>
<rect x="447.33" y="258.75" width="2.6" height="17.5" fill="#e8200e"/>
<line x1="452.83" y1="251.25" x2="452.83" y2="263.75" stroke="#1a62d2" stroke-width="1" stroke-opacity="0.85"/>
<rect x="451.53" y="252.5" width="2.6" height="3.75" fill="#1a62d2"/>
<line x1="457.03" y1="255" x2="457.03" y2="277.5" stroke="#1a62d2" stroke-width="1" stroke-opacity="0.85"/>
<rect x="455.73" y="260" width="2.6" height="16.25" fill="#1a62d2"/>
<line x1="461.22" y1="263.75" x2="461.22" y2="277.5" stroke="#1a62d2" stroke-width="1" stroke-opacity="0.85"/>
<rect x="459.92" y="265" width="2.6" height="11.25" fill="#1a62d2"/>
<line x1="465.42" y1="257.5" x2="465.42" y2="278.75" stroke="#1a62d2" stroke-width="1" stroke-opacity="0.85"/>
<rect x="464.12" y="268.75" width="2.6" height="5.0" fill="#1a62d2"/>
<line x1="469.62" y1="256.25" x2="469.62" y2="263.75" stroke="#1a62d2" stroke-width="1" stroke-opacity="0.85"/>
<rect x="468.32" y="258.75" width="2.6" height="3.75" fill="#1a62d2"/>
<line x1="473.81" y1="243.75" x2="473.81" y2="252.5" stroke="#e8200e" stroke-width="1" stroke-opacity="0.85"/>
<rect x="472.51" y="245" width="2.6" height="5" fill="#e8200e"/>
<line x1="478.01" y1="237" x2="478.01" y2="252.5" stroke="#e8200e" stroke-width="1" stroke-opacity="0.85"/>
<rect x="476.71" y="237.5" width="2.6" height="10.0" fill="#e8200e"/>
<line x1="482.21" y1="242.5" x2="482.21" y2="252.5" stroke="#1a62d2" stroke-width="1" stroke-opacity="0.85"/>
<rect x="480.91" y="243.75" width="2.6" height="6.25" fill="#1a62d2"/>
<line x1="486.41" y1="238.75" x2="486.41" y2="248.75" stroke="#1a62d2" stroke-width="1" stroke-opacity="0.85"/>
<rect x="485.11" y="240" width="2.6" height="3.75" fill="#1a62d2"/>
<line x1="490.6" y1="248.75" x2="490.6" y2="267.5" stroke="#1a62d2" stroke-width="1" stroke-opacity="0.85"/>
<rect x="489.3" y="250" width="2.6" height="15" fill="#1a62d2"/>
<line x1="494.8" y1="260" x2="494.8" y2="268.75" stroke="#1a62d2" stroke-width="1" stroke-opacity="0.85"/>
<rect x="493.5" y="261.25" width="2.6" height="5.0" fill="#1a62d2"/>
<line x1="499.0" y1="263.75" x2="499.0" y2="276.25" stroke="#e8200e" stroke-width="1" stroke-opacity="0.85"/>
<rect x="497.7" y="266.25" width="2.6" height="5.0" fill="#e8200e"/>
<line x1="503.19" y1="277.5" x2="503.19" y2="287.5" stroke="#1a62d2" stroke-width="1" stroke-opacity="0.85"/>
<rect x="501.89" y="285" width="2.6" height="1" fill="#1a62d2"/>
<line x1="507.39" y1="302" x2="507.39" y2="326.25" stroke="#1a62d2" stroke-width="1" stroke-opacity="0.85"/>
<rect x="506.09" y="302.5" width="2.6" height="23.75" fill="#1a62d2"/>
<line x1="511.59" y1="326.25" x2="511.59" y2="348.75" stroke="#e8200e" stroke-width="1" stroke-opacity="0.85"/>
<rect x="510.29" y="330" width="2.6" height="11.25" fill="#e8200e"/>
<line x1="515.78" y1="330" x2="515.78" y2="358.75" stroke="#1a62d2" stroke-width="1" stroke-opacity="0.85"/>
<rect x="514.48" y="331.25" width="2.6" height="22.5" fill="#1a62d2"/>
<line x1="519.98" y1="328.75" x2="519.98" y2="352.5" stroke="#1a62d2" stroke-width="1" stroke-opacity="0.85"/>
<rect x="518.68" y="333.75" width="2.6" height="18.75" fill="#1a62d2"/>
<line x1="524.18" y1="355" x2="524.18" y2="378.75" stroke="#e8200e" stroke-width="1" stroke-opacity="0.85"/>
<rect x="522.88" y="356.25" width="2.6" height="16.25" fill="#e8200e"/>
<line x1="528.38" y1="351.25" x2="528.38" y2="390" stroke="#1a62d2" stroke-width="1" stroke-opacity="0.85"/>
<rect x="527.08" y="352.5" width="2.6" height="27.5" fill="#1a62d2"/>
<line x1="532.57" y1="365" x2="532.57" y2="383.75" stroke="#e8200e" stroke-width="1" stroke-opacity="0.85"/>
<rect x="531.27" y="371.25" width="2.6" height="6.25" fill="#e8200e"/>
<line x1="536.77" y1="366.25" x2="536.77" y2="405" stroke="#1a62d2" stroke-width="1" stroke-opacity="0.85"/>
<rect x="535.47" y="367.5" width="2.6" height="37.5" fill="#1a62d2"/>
<line x1="540.97" y1="397.5" x2="540.97" y2="422.5" stroke="#1a62d2" stroke-width="1" stroke-opacity="0.85"/>
<rect x="539.67" y="400" width="2.6" height="18.75" fill="#1a62d2"/>
<line x1="545.16" y1="391.25" x2="545.16" y2="416.25" stroke="#e8200e" stroke-width="1" stroke-opacity="0.85"/>
<rect x="543.86" y="392.5" width="2.6" height="21.25" fill="#e8200e"/>
<line x1="549.36" y1="368.75" x2="549.36" y2="393.75" stroke="#e8200e" stroke-width="1" stroke-opacity="0.85"/>
<rect x="548.06" y="373.75" width="2.6" height="11.25" fill="#e8200e"/>
<line x1="553.56" y1="365" x2="553.56" y2="378.75" stroke="#e8200e" stroke-width="1" stroke-opacity="0.85"/>
<rect x="552.26" y="365" width="2.6" height="6.25" fill="#e8200e"/>
<line x1="557.75" y1="378.75" x2="557.75" y2="390" stroke="#1a62d2" stroke-width="1" stroke-opacity="0.85"/>
<rect x="556.45" y="380" width="2.6" height="8.75" fill="#1a62d2"/>
<line x1="561.95" y1="390" x2="561.95" y2="411.25" stroke="#1a62d2" stroke-width="1" stroke-opacity="0.85"/>
<rect x="560.65" y="391.25" width="2.6" height="18.75" fill="#1a62d2"/>
<line x1="566.15" y1="402.5" x2="566.15" y2="430" stroke="#1a62d2" stroke-width="1" stroke-opacity="0.85"/>
<rect x="564.85" y="403.75" width="2.6" height="20.0" fill="#1a62d2"/>
<line x1="570.35" y1="416.25" x2="570.35" y2="437.5" stroke="#1a62d2" stroke-width="1" stroke-opacity="0.85"/>
<rect x="569.05" y="420" width="2.6" height="7.5" fill="#1a62d2"/>
<line x1="574.54" y1="403.75" x2="574.54" y2="421.25" stroke="#e8200e" stroke-width="1" stroke-opacity="0.85"/>
<rect x="573.24" y="405" width="2.6" height="10" fill="#e8200e"/>
<line x1="578.74" y1="408.75" x2="578.74" y2="431.25" stroke="#1a62d2" stroke-width="1" stroke-opacity="0.85"/>
<rect x="577.44" y="410" width="2.6" height="20" fill="#1a62d2"/>
<line x1="582.94" y1="403.75" x2="582.94" y2="422.5" stroke="#e8200e" stroke-width="1" stroke-opacity="0.85"/>
<rect x="581.64" y="408.75" width="2.6" height="12.5" fill="#e8200e"/>
<line x1="587.13" y1="392.5" x2="587.13" y2="402.5" stroke="#1a62d2" stroke-width="1" stroke-opacity="0.85"/>
<rect x="585.83" y="400" width="2.6" height="2" fill="#1a62d2"/>
<line x1="591.33" y1="393.75" x2="591.33" y2="407.5" stroke="#1a62d2" stroke-width="1" stroke-opacity="0.85"/>
<rect x="590.03" y="396.25" width="2.6" height="8.75" fill="#1a62d2"/>
<line x1="595.53" y1="407.5" x2="595.53" y2="425" stroke="#1a62d2" stroke-width="1" stroke-opacity="0.85"/>
<rect x="594.23" y="410" width="2.6" height="8.75" fill="#1a62d2"/>
<line x1="599.72" y1="405" x2="599.72" y2="421.25" stroke="#e8200e" stroke-width="1" stroke-opacity="0.85"/>
<rect x="598.42" y="411.25" width="2.6" height="3.75" fill="#e8200e"/>
<line x1="603.92" y1="406.25" x2="603.92" y2="422.5" stroke="#e8200e" stroke-width="1" stroke-opacity="0.85"/>
<rect x="602.62" y="413.75" width="2.6" height="5.0" fill="#e8200e"/>
<line x1="608.12" y1="407.5" x2="608.12" y2="428.75" stroke="#1a62d2" stroke-width="1" stroke-opacity="0.85"/>
<rect x="606.82" y="410" width="2.6" height="2" fill="#1a62d2"/>
<line x1="612.32" y1="387" x2="612.32" y2="406.25" stroke="#e8200e" stroke-width="1" stroke-opacity="0.85"/>
<rect x="611.02" y="387.5" width="2.6" height="17.5" fill="#e8200e"/>
<line x1="616.51" y1="388.75" x2="616.51" y2="395" stroke="#e8200e" stroke-width="1" stroke-opacity="0.85"/>
<rect x="615.21" y="390" width="2.6" height="3.75" fill="#e8200e"/>
<line x1="620.71" y1="371.25" x2="620.71" y2="385" stroke="#1a62d2" stroke-width="1" stroke-opacity="0.85"/>
<rect x="619.41" y="372.5" width="2.6" height="11.25" fill="#1a62d2"/>
<line x1="624.91" y1="370.5" x2="624.91" y2="383" stroke="#e8200e" stroke-width="1" stroke-opacity="0.85"/>
<rect x="623.61" y="371.25" width="2.6" height="11.25" fill="#e8200e"/>
<line x1="629.1" y1="367.5" x2="629.1" y2="381.25" stroke="#1a62d2" stroke-width="1" stroke-opacity="0.85"/>
<rect x="627.8" y="373.75" width="2.6" height="6.25" fill="#1a62d2"/>
<line x1="633.3" y1="370" x2="633.3" y2="385" stroke="#e8200e" stroke-width="1" stroke-opacity="0.85"/>
<rect x="632.0" y="373.75" width="2.6" height="10.0" fill="#e8200e"/>
<line x1="637.5" y1="368.75" x2="637.5" y2="380" stroke="#e8200e" stroke-width="1" stroke-opacity="0.85"/>
<rect x="636.2" y="370" width="2.6" height="8.75" fill="#e8200e"/>
<line x1="641.69" y1="368.75" x2="641.69" y2="377.5" stroke="#e8200e" stroke-width="1" stroke-opacity="0.85"/>
<rect x="640.39" y="370" width="2.6" height="6.25" fill="#e8200e"/>
<line x1="645.89" y1="353.75" x2="645.89" y2="362.5" stroke="#1a62d2" stroke-width="1" stroke-opacity="0.85"/>
<rect x="644.59" y="357.5" width="2.6" height="2.5" fill="#1a62d2"/>
<line x1="650.09" y1="346.25" x2="650.09" y2="356.25" stroke="#1a62d2" stroke-width="1" stroke-opacity="0.85"/>
<rect x="648.79" y="350" width="2.6" height="2.5" fill="#1a62d2"/>
<line x1="654.28" y1="346.25" x2="654.28" y2="357.5" stroke="#e8200e" stroke-width="1" stroke-opacity="0.85"/>
<rect x="652.99" y="351.25" width="2.6" height="3.75" fill="#e8200e"/>
<line x1="658.48" y1="350" x2="658.48" y2="362.5" stroke="#1a62d2" stroke-width="1" stroke-opacity="0.85"/>
<rect x="657.18" y="351.25" width="2.6" height="7.5" fill="#1a62d2"/>
<line x1="662.68" y1="345.5" x2="662.68" y2="359.5" stroke="#e8200e" stroke-width="1" stroke-opacity="0.85"/>
<rect x="661.38" y="346.25" width="2.6" height="12.5" fill="#e8200e"/>
<line x1="666.88" y1="337.5" x2="666.88" y2="343.75" stroke="#1a62d2" stroke-width="1" stroke-opacity="0.85"/>
<rect x="665.58" y="338.75" width="2.6" height="3.75" fill="#1a62d2"/>
<line x1="671.07" y1="328.75" x2="671.07" y2="338.75" stroke="#e8200e" stroke-width="1" stroke-opacity="0.85"/>
<rect x="669.77" y="331.25" width="2.6" height="6.25" fill="#e8200e"/>
<line x1="675.27" y1="330" x2="675.27" y2="339.5" stroke="#e8200e" stroke-width="1" stroke-opacity="0.85"/>
<rect x="673.97" y="331.25" width="2.6" height="7.5" fill="#e8200e"/>
<line x1="679.47" y1="324.5" x2="679.47" y2="338.75" stroke="#e8200e" stroke-width="1" stroke-opacity="0.85"/>
<rect x="678.17" y="325" width="2.6" height="7.5" fill="#e8200e"/>
<line x1="683.66" y1="330" x2="683.66" y2="338.75" stroke="#1a62d2" stroke-width="1" stroke-opacity="0.85"/>
<rect x="682.36" y="331.25" width="2.6" height="6.25" fill="#1a62d2"/>
<line x1="687.86" y1="315.5" x2="687.86" y2="325.5" stroke="#e8200e" stroke-width="1" stroke-opacity="0.85"/>
<rect x="686.56" y="316.25" width="2.6" height="8.75" fill="#e8200e"/>
<line x1="692.06" y1="311.25" x2="692.06" y2="321.25" stroke="#e8200e" stroke-width="1" stroke-opacity="0.85"/>
<rect x="690.76" y="313.75" width="2.6" height="6.25" fill="#e8200e"/>
<line x1="696.25" y1="305" x2="696.25" y2="312.5" stroke="#1a62d2" stroke-width="1" stroke-opacity="0.85"/>
<rect x="694.96" y="305.75" width="2.6" height="6.25" fill="#1a62d2"/>
<line x1="700.45" y1="305" x2="700.45" y2="322.5" stroke="#1a62d2" stroke-width="1" stroke-opacity="0.85"/>
<rect x="699.15" y="308.75" width="2.6" height="12.5" fill="#1a62d2"/>
<line x1="704.65" y1="321.25" x2="704.65" y2="333.75" stroke="#e8200e" stroke-width="1" stroke-opacity="0.85"/>
<rect x="703.35" y="322.5" width="2.6" height="6.25" fill="#e8200e"/>
<line x1="708.85" y1="322" x2="708.85" y2="332" stroke="#1a62d2" stroke-width="1" stroke-opacity="0.85"/>
<rect x="707.55" y="322.5" width="2.6" height="8.75" fill="#1a62d2"/>
<line x1="713.04" y1="340" x2="713.04" y2="348.75" stroke="#1a62d2" stroke-width="1" stroke-opacity="0.85"/>
<rect x="711.74" y="341.25" width="2.6" height="6.25" fill="#1a62d2"/>
<line x1="717.24" y1="348.75" x2="717.24" y2="361.25" stroke="#1a62d2" stroke-width="1" stroke-opacity="0.85"/>
<rect x="715.94" y="351.25" width="2.6" height="8.75" fill="#1a62d2"/>
<line x1="721.44" y1="350" x2="721.44" y2="361.25" stroke="#e8200e" stroke-width="1" stroke-opacity="0.85"/>
<rect x="720.14" y="352.5" width="2.6" height="2.5" fill="#e8200e"/>
<line x1="725.63" y1="338" x2="725.63" y2="351.25" stroke="#e8200e" stroke-width="1" stroke-opacity="0.85"/>
<rect x="724.33" y="338.75" width="2.6" height="10.0" fill="#e8200e"/>
<line x1="729.83" y1="327.5" x2="729.83" y2="340" stroke="#1a62d2" stroke-width="1" stroke-opacity="0.85"/>
<rect x="728.53" y="331.25" width="2.6" height="7.5" fill="#1a62d2"/>
<line x1="734.03" y1="360" x2="734.03" y2="368.75" stroke="#1a62d2" stroke-width="1" stroke-opacity="0.85"/>
<rect x="732.73" y="361.25" width="2.6" height="3.75" fill="#1a62d2"/>
<line x1="738.23" y1="350" x2="738.23" y2="361.25" stroke="#e8200e" stroke-width="1" stroke-opacity="0.85"/>
<rect x="736.93" y="351.25" width="2.6" height="7.5" fill="#e8200e"/>
<line x1="742.42" y1="340" x2="742.42" y2="363.75" stroke="#e8200e" stroke-width="1" stroke-opacity="0.85"/>
<rect x="741.12" y="341.25" width="2.6" height="18.75" fill="#e8200e"/>
<line x1="746.62" y1="353.75" x2="746.62" y2="370" stroke="#1a62d2" stroke-width="1" stroke-opacity="0.85"/>
<rect x="745.32" y="355" width="2.6" height="13.75" fill="#1a62d2"/>
<line x1="750.82" y1="360" x2="750.82" y2="376.25" stroke="#1a62d2" stroke-width="1" stroke-opacity="0.85"/>
<rect x="749.52" y="361.25" width="2.6" height="11.25" fill="#1a62d2"/>
<line x1="755.01" y1="365" x2="755.01" y2="380" stroke="#1a62d2" stroke-width="1" stroke-opacity="0.85"/>
<rect x="753.71" y="371.25" width="2.6" height="4.25" fill="#1a62d2"/>
<line x1="759.21" y1="366.25" x2="759.21" y2="378.75" stroke="#e8200e" stroke-width="1" stroke-opacity="0.85"/>
<rect x="757.91" y="371.25" width="2.6" height="2.5" fill="#e8200e"/>
<line x1="763.41" y1="377.5" x2="763.41" y2="393.75" stroke="#1a62d2" stroke-width="1" stroke-opacity="0.85"/>
<rect x="762.11" y="378.75" width="2.6" height="8.75" fill="#1a62d2"/>
<line x1="767.6" y1="378.75" x2="767.6" y2="387.5" stroke="#1a62d2" stroke-width="1" stroke-opacity="0.85"/>
<rect x="766.3" y="380" width="2.6" height="3.75" fill="#1a62d2"/>
<line x1="771.8" y1="350" x2="771.8" y2="368.75" stroke="#e8200e" stroke-width="1" stroke-opacity="0.85"/>
<rect x="770.5" y="351.25" width="2.6" height="16.25" fill="#e8200e"/>
<line x1="776.0" y1="368.75" x2="776.0" y2="386.25" stroke="#e8200e" stroke-width="1" stroke-opacity="0.85"/>
<rect x="774.7" y="370" width="2.6" height="11.25" fill="#e8200e"/>
<line x1="780.2" y1="366.25" x2="780.2" y2="376.25" stroke="#1a62d2" stroke-width="1" stroke-opacity="0.85"/>
<rect x="778.9" y="367.5" width="2.6" height="7.5" fill="#1a62d2"/>
<line x1="784.39" y1="380" x2="784.39" y2="391.25" stroke="#1a62d2" stroke-width="1" stroke-opacity="0.85"/>
<rect x="783.09" y="382.5" width="2.6" height="3.75" fill="#1a62d2"/>
<line x1="788.59" y1="381.25" x2="788.59" y2="400" stroke="#1a62d2" stroke-width="1" stroke-opacity="0.85"/>
<rect x="787.29" y="382.5" width="2.6" height="16.25" fill="#1a62d2"/>
<line x1="792.79" y1="387.5" x2="792.79" y2="397.5" stroke="#1a62d2" stroke-width="1" stroke-opacity="0.85"/>
<rect x="791.49" y="388.75" width="2.6" height="5.0" fill="#1a62d2"/>
<line x1="796.98" y1="396.25" x2="796.98" y2="406.25" stroke="#1a62d2" stroke-width="1" stroke-opacity="0.85"/>
<rect x="795.68" y="398.75" width="2.6" height="5.0" fill="#1a62d2"/>
<line x1="801.18" y1="408.75" x2="801.18" y2="421.25" stroke="#e8200e" stroke-width="1" stroke-opacity="0.85"/>
<rect x="799.88" y="410" width="2.6" height="7.5" fill="#e8200e"/>
<line x1="805.38" y1="407.5" x2="805.38" y2="432.5" stroke="#1a62d2" stroke-width="1" stroke-opacity="0.85"/>
<rect x="804.08" y="408.75" width="2.6" height="22.5" fill="#1a62d2"/>
<line x1="809.57" y1="442.5" x2="809.57" y2="467.5" stroke="#1a62d2" stroke-width="1" stroke-opacity="0.85"/>
<rect x="808.27" y="443.75" width="2.6" height="21.25" fill="#1a62d2"/>
<line x1="813.77" y1="461.25" x2="813.77" y2="476.25" stroke="#1a62d2" stroke-width="1" stroke-opacity="0.85"/>
<rect x="812.47" y="462" width="2.6" height="3" fill="#1a62d2"/>
<line x1="817.97" y1="463.75" x2="817.97" y2="497.5" stroke="#1a62d2" stroke-width="1" stroke-opacity="0.85"/>
<rect x="816.67" y="470" width="2.6" height="20" fill="#1a62d2"/>
<line x1="822.16" y1="475" x2="822.16" y2="492.5" stroke="#1a62d2" stroke-width="1" stroke-opacity="0.85"/>
<rect x="820.87" y="476.25" width="2.6" height="13.75" fill="#1a62d2"/>
<line x1="826.36" y1="486.25" x2="826.36" y2="506.25" stroke="#1a62d2" stroke-width="1" stroke-opacity="0.85"/>
<rect x="825.06" y="492.5" width="2.6" height="3.75" fill="#1a62d2"/>
<line x1="830.56" y1="467.5" x2="830.56" y2="483.75" stroke="#e8200e" stroke-width="1" stroke-opacity="0.85"/>
<rect x="829.26" y="468.75" width="2.6" height="11.25" fill="#e8200e"/>
<line x1="834.76" y1="447.5" x2="834.76" y2="468.75" stroke="#1a62d2" stroke-width="1" stroke-opacity="0.85"/>
<rect x="833.46" y="448.75" width="2.6" height="18.75" fill="#1a62d2"/>
<line x1="838.95" y1="448.75" x2="838.95" y2="463.75" stroke="#e8200e" stroke-width="1" stroke-opacity="0.85"/>
<rect x="837.65" y="455" width="2.6" height="5" fill="#e8200e"/>
<line x1="843.15" y1="451.25" x2="843.15" y2="467.5" stroke="#e8200e" stroke-width="1" stroke-opacity="0.85"/>
<rect x="841.85" y="456.25" width="2.6" height="10.0" fill="#e8200e"/>
<line x1="847.35" y1="477.5" x2="847.35" y2="487.5" stroke="#1a62d2" stroke-width="1" stroke-opacity="0.85"/>
<rect x="846.05" y="477.5" width="2.6" height="1.5" fill="#1a62d2"/>
<line x1="851.54" y1="470" x2="851.54" y2="483.75" stroke="#e8200e" stroke-width="1" stroke-opacity="0.85"/>
<rect x="850.24" y="472.5" width="2.6" height="7.5" fill="#e8200e"/>
<line x1="855.74" y1="473.75" x2="855.74" y2="493" stroke="#1a62d2" stroke-width="1" stroke-opacity="0.85"/>
<rect x="854.44" y="475" width="2.6" height="17.5" fill="#1a62d2"/>
<line x1="859.94" y1="463.75" x2="859.94" y2="476.25" stroke="#e8200e" stroke-width="1" stroke-opacity="0.85"/>
<rect x="858.64" y="467.8" width="2.6" height="8.2" fill="#e8200e"/>
<line x1="864.13" y1="463.75" x2="864.13" y2="486.25" stroke="#e8200e" stroke-width="1" stroke-opacity="0.85"/>
<rect x="862.84" y="465" width="2.6" height="16.25" fill="#e8200e"/>
<line x1="868.33" y1="448.75" x2="868.33" y2="467.5" stroke="#e8200e" stroke-width="1" stroke-opacity="0.85"/>
<rect x="867.03" y="460" width="2.6" height="3.75" fill="#e8200e"/>
<line x1="872.53" y1="441.25" x2="872.53" y2="458.75" stroke="#1a62d2" stroke-width="1" stroke-opacity="0.85"/>
<rect x="871.23" y="448.75" width="2.6" height="7.5" fill="#1a62d2"/>
<line x1="876.73" y1="458.75" x2="876.73" y2="475" stroke="#1a62d2" stroke-width="1" stroke-opacity="0.85"/>
<rect x="875.43" y="462.5" width="2.6" height="3.75" fill="#1a62d2"/>
<line x1="880.92" y1="463.75" x2="880.92" y2="472.5" stroke="#e8200e" stroke-width="1" stroke-opacity="0.85"/>
<rect x="879.62" y="467.5" width="2.6" height="3.75" fill="#e8200e"/>
<line x1="885.12" y1="446.25" x2="885.12" y2="460" stroke="#1a62d2" stroke-width="1" stroke-opacity="0.85"/>
<rect x="883.82" y="450" width="2.6" height="7.5" fill="#1a62d2"/>
<line x1="889.32" y1="447.5" x2="889.32" y2="460" stroke="#1a62d2" stroke-width="1" stroke-opacity="0.85"/>
<rect x="888.02" y="452.5" width="2.6" height="5.0" fill="#1a62d2"/>
<line x1="893.51" y1="446.25" x2="893.51" y2="458.75" stroke="#e8200e" stroke-width="1" stroke-opacity="0.85"/>
<rect x="892.21" y="448.75" width="2.6" height="7.5" fill="#e8200e"/>
<line x1="897.71" y1="430" x2="897.71" y2="445" stroke="#e8200e" stroke-width="1" stroke-opacity="0.85"/>
<rect x="896.41" y="431.25" width="2.6" height="12.5" fill="#e8200e"/>
<line x1="901.91" y1="430" x2="901.91" y2="442.5" stroke="#1a62d2" stroke-width="1" stroke-opacity="0.85"/>
<rect x="900.61" y="435" width="2.6" height="6.25" fill="#1a62d2"/>
<line x1="906.11" y1="427.5" x2="906.11" y2="438.75" stroke="#1a62d2" stroke-width="1" stroke-opacity="0.85"/>
<rect x="904.81" y="428.75" width="2.6" height="1.25" fill="#1a62d2"/>
<line x1="910.3" y1="407" x2="910.3" y2="427" stroke="#e8200e" stroke-width="1" stroke-opacity="0.85"/>
<rect x="909.0" y="407.5" width="2.6" height="18.75" fill="#e8200e"/>
<line x1="914.5" y1="402.5" x2="914.5" y2="415" stroke="#e8200e" stroke-width="1" stroke-opacity="0.85"/>
<rect x="913.2" y="406.25" width="2.6" height="7.5" fill="#e8200e"/>
<line x1="918.7" y1="403.75" x2="918.7" y2="428" stroke="#e8200e" stroke-width="1" stroke-opacity="0.85"/>
<rect x="917.4" y="411.25" width="2.6" height="16.25" fill="#e8200e"/>
<line x1="922.89" y1="400.5" x2="922.89" y2="418.75" stroke="#e8200e" stroke-width="1" stroke-opacity="0.85"/>
<rect x="921.59" y="401.25" width="2.6" height="12.5" fill="#e8200e"/>
<line x1="927.09" y1="389.5" x2="927.09" y2="400" stroke="#e8200e" stroke-width="1" stroke-opacity="0.85"/>
<rect x="925.79" y="390" width="2.6" height="6.25" fill="#e8200e"/>
<line x1="929.687" y1="390.4" x2="932.8870000000001" y2="390.4" stroke="#e8200e" stroke-width="1.2"/>
<line x1="1.35" y1="41" x2="1.35" y2="805" stroke="#9c9c9c" stroke-width="1"/>
<line x1="0" y1="41" x2="961" y2="41" stroke="#d4d4d4" stroke-width="1"/>
<line x1="961" y1="41.3" x2="1019.5" y2="41.3" stroke="#a4acb6" stroke-width="1"/>
<line x1="0" y1="523.4" x2="1019.5" y2="523.4" stroke="#9a9a9a" stroke-width="1.25"/>
<line x1="0" y1="670.7" x2="1019.5" y2="670.7" stroke="#9a9a9a" stroke-width="1.2"/>
<line x1="0" y1="789.5" x2="1019.5" y2="789.5" stroke="#9a9a9a" stroke-width="1.2"/>
<line x1="961.2" y1="41" x2="961.2" y2="805" stroke="#9a9fa6" stroke-width="1"/>
<line x1="0" y1="805" x2="1019.5" y2="805" stroke="#9a9a9a" stroke-width="1"/>
<line x1="56" y1="789.5" x2="56" y2="805" stroke="#9a9a9a" stroke-width="1"/>
<line x1="140.5" y1="789.5" x2="140.5" y2="805" stroke="#9a9a9a" stroke-width="1"/>
<line x1="215.5" y1="789.5" x2="215.5" y2="805" stroke="#9a9a9a" stroke-width="1"/>
<line x1="303.5" y1="789.5" x2="303.5" y2="805" stroke="#9a9a9a" stroke-width="1"/>
<line x1="392.5" y1="789.5" x2="392.5" y2="805" stroke="#9a9a9a" stroke-width="1"/>
<line x1="480.5" y1="789.5" x2="480.5" y2="805" stroke="#9a9a9a" stroke-width="1"/>
<line x1="564.5" y1="789.5" x2="564.5" y2="805" stroke="#9a9a9a" stroke-width="1"/>
<line x1="652.7" y1="789.5" x2="652.7" y2="805" stroke="#9a9a9a" stroke-width="1"/>
<line x1="745.2" y1="789.5" x2="745.2" y2="805" stroke="#9a9a9a" stroke-width="1"/>
<line x1="829" y1="789.5" x2="829" y2="805" stroke="#9a9a9a" stroke-width="1"/>
<line x1="908.9" y1="789.5" x2="908.9" y2="805" stroke="#9a9a9a" stroke-width="1"/>
<line x1="961" y1="73.728" x2="964" y2="73.728" stroke="#909090" stroke-width="1"/>
<line x1="961" y1="83.5" x2="967" y2="83.5" stroke="#858585" stroke-width="1"/>
<text x="969" y="87.1" font-size="12.5" fill="#525252" textLength="38" lengthAdjust="spacingAndGlyphs">3,000.00</text>
<line x1="961" y1="93.272" x2="964" y2="93.272" stroke="#909090" stroke-width="1"/>
<line x1="961" y1="103.044" x2="964" y2="103.044" stroke="#909090" stroke-width="1"/>
<line x1="961" y1="112.816" x2="964" y2="112.816" stroke="#909090" stroke-width="1"/>
<line x1="961" y1="122.588" x2="964" y2="122.588" stroke="#909090" stroke-width="1"/>
<line x1="961" y1="132.36" x2="967" y2="132.36" stroke="#858585" stroke-width="1"/>
<text x="969" y="136.0" font-size="12.5" fill="#525252" textLength="38" lengthAdjust="spacingAndGlyphs">2,900.00</text>
<line x1="961" y1="142.132" x2="964" y2="142.132" stroke="#909090" stroke-width="1"/>
<line x1="961" y1="151.904" x2="964" y2="151.904" stroke="#909090" stroke-width="1"/>
<line x1="961" y1="161.676" x2="964" y2="161.676" stroke="#909090" stroke-width="1"/>
<line x1="961" y1="171.44799999999998" x2="964" y2="171.44799999999998" stroke="#909090" stroke-width="1"/>
<line x1="961" y1="181.22" x2="967" y2="181.22" stroke="#858585" stroke-width="1"/>
<text x="969" y="184.8" font-size="12.5" fill="#525252" textLength="38" lengthAdjust="spacingAndGlyphs">2,800.00</text>
<line x1="961" y1="190.992" x2="964" y2="190.992" stroke="#909090" stroke-width="1"/>
<line x1="961" y1="200.764" x2="964" y2="200.764" stroke="#909090" stroke-width="1"/>
<line x1="961" y1="210.536" x2="964" y2="210.536" stroke="#909090" stroke-width="1"/>
<line x1="961" y1="220.308" x2="964" y2="220.308" stroke="#909090" stroke-width="1"/>
<line x1="961" y1="230.07999999999998" x2="967" y2="230.07999999999998" stroke="#858585" stroke-width="1"/>
<text x="969" y="233.7" font-size="12.5" fill="#525252" textLength="38" lengthAdjust="spacingAndGlyphs">2,700.00</text>
<line x1="961" y1="239.852" x2="964" y2="239.852" stroke="#909090" stroke-width="1"/>
<line x1="961" y1="249.624" x2="964" y2="249.624" stroke="#909090" stroke-width="1"/>
<line x1="961" y1="259.39599999999996" x2="964" y2="259.39599999999996" stroke="#909090" stroke-width="1"/>
<line x1="961" y1="269.168" x2="964" y2="269.168" stroke="#909090" stroke-width="1"/>
<line x1="961" y1="278.94" x2="967" y2="278.94" stroke="#858585" stroke-width="1"/>
<text x="969" y="282.5" font-size="12.5" fill="#525252" textLength="38" lengthAdjust="spacingAndGlyphs">2,600.00</text>
<line x1="961" y1="288.712" x2="964" y2="288.712" stroke="#909090" stroke-width="1"/>
<line x1="961" y1="298.484" x2="964" y2="298.484" stroke="#909090" stroke-width="1"/>
<line x1="961" y1="308.256" x2="964" y2="308.256" stroke="#909090" stroke-width="1"/>
<line x1="961" y1="318.028" x2="964" y2="318.028" stroke="#909090" stroke-width="1"/>
<line x1="961" y1="327.79999999999995" x2="967" y2="327.79999999999995" stroke="#858585" stroke-width="1"/>
<text x="969" y="331.4" font-size="12.5" fill="#525252" textLength="38" lengthAdjust="spacingAndGlyphs">2,500.00</text>
<line x1="961" y1="337.572" x2="964" y2="337.572" stroke="#909090" stroke-width="1"/>
<line x1="961" y1="347.344" x2="964" y2="347.344" stroke="#909090" stroke-width="1"/>
<line x1="961" y1="357.116" x2="964" y2="357.116" stroke="#909090" stroke-width="1"/>
<line x1="961" y1="366.888" x2="964" y2="366.888" stroke="#909090" stroke-width="1"/>
<line x1="961" y1="376.65999999999997" x2="967" y2="376.65999999999997" stroke="#858585" stroke-width="1"/>
<text x="969" y="380.3" font-size="12.5" fill="#525252" textLength="38" lengthAdjust="spacingAndGlyphs">2,400.00</text>
<line x1="961" y1="386.43199999999996" x2="964" y2="386.43199999999996" stroke="#909090" stroke-width="1"/>
<line x1="961" y1="396.204" x2="964" y2="396.204" stroke="#909090" stroke-width="1"/>
<line x1="961" y1="405.976" x2="964" y2="405.976" stroke="#909090" stroke-width="1"/>
<line x1="961" y1="415.748" x2="964" y2="415.748" stroke="#909090" stroke-width="1"/>
<line x1="961" y1="425.52" x2="967" y2="425.52" stroke="#858585" stroke-width="1"/>
<text x="969" y="429.1" font-size="12.5" fill="#525252" textLength="38" lengthAdjust="spacingAndGlyphs">2,300.00</text>
<line x1="961" y1="435.292" x2="964" y2="435.292" stroke="#909090" stroke-width="1"/>
<line x1="961" y1="445.06399999999996" x2="964" y2="445.06399999999996" stroke="#909090" stroke-width="1"/>
<line x1="961" y1="454.83599999999996" x2="964" y2="454.83599999999996" stroke="#909090" stroke-width="1"/>
<line x1="961" y1="464.608" x2="964" y2="464.608" stroke="#909090" stroke-width="1"/>
<line x1="961" y1="474.38" x2="967" y2="474.38" stroke="#858585" stroke-width="1"/>
<text x="969" y="478.0" font-size="12.5" fill="#525252" textLength="38" lengthAdjust="spacingAndGlyphs">2,200.00</text>
<line x1="961" y1="484.152" x2="964" y2="484.152" stroke="#909090" stroke-width="1"/>
<line x1="961" y1="493.924" x2="964" y2="493.924" stroke="#909090" stroke-width="1"/>
<line x1="961" y1="503.69599999999997" x2="964" y2="503.69599999999997" stroke="#909090" stroke-width="1"/>
<line x1="961" y1="513.468" x2="964" y2="513.468" stroke="#909090" stroke-width="1"/>
<line x1="961" y1="649.7700000000001" x2="967" y2="649.7700000000001" stroke="#777" stroke-width="1"/>
<text x="969" y="654.0" font-size="12" fill="#525252" textLength="35" lengthAdjust="spacingAndGlyphs">250,000</text>
<line x1="961" y1="630.84" x2="967" y2="630.84" stroke="#777" stroke-width="1"/>
<text x="969" y="635.0" font-size="12" fill="#525252" textLength="35" lengthAdjust="spacingAndGlyphs">500,000</text>
<line x1="961" y1="611.9100000000001" x2="967" y2="611.9100000000001" stroke="#777" stroke-width="1"/>
<text x="969" y="616.1" font-size="12" fill="#525252" textLength="35" lengthAdjust="spacingAndGlyphs">750,000</text>
<line x1="961" y1="592.98" x2="967" y2="592.98" stroke="#777" stroke-width="1"/>
<text x="969" y="597.2" font-size="12" fill="#525252" textLength="31.5" lengthAdjust="spacingAndGlyphs">1,000K</text>
<line x1="961" y1="574.0500000000001" x2="967" y2="574.0500000000001" stroke="#777" stroke-width="1"/>
<text x="969" y="578.3" font-size="12" fill="#525252" textLength="31.5" lengthAdjust="spacingAndGlyphs">1,250K</text>
<line x1="961" y1="555.12" x2="967" y2="555.12" stroke="#777" stroke-width="1"/>
<text x="969" y="559.3" font-size="12" fill="#525252" textLength="31.5" lengthAdjust="spacingAndGlyphs">1,500K</text>
<line x1="961" y1="536.19" x2="967" y2="536.19" stroke="#777" stroke-width="1"/>
<text x="969" y="540.4" font-size="12" fill="#525252" textLength="31.5" lengthAdjust="spacingAndGlyphs">1,750K</text>
<line x1="961" y1="700.75" x2="967" y2="700.75" stroke="#777" stroke-width="1"/>
<text x="969" y="705.0" font-size="12" fill="#525252" textLength="49" lengthAdjust="spacingAndGlyphs">22,500,000</text>
<line x1="961" y1="694.2" x2="964" y2="694.2" stroke="#888" stroke-width="1"/>
<line x1="961" y1="687.65" x2="964" y2="687.65" stroke="#888" stroke-width="1"/>
<line x1="961" y1="681.1" x2="964" y2="681.1" stroke="#888" stroke-width="1"/>
<line x1="961" y1="674.55" x2="964" y2="674.55" stroke="#888" stroke-width="1"/>
<line x1="961" y1="733.75" x2="967" y2="733.75" stroke="#777" stroke-width="1"/>
<text x="969" y="738.0" font-size="12" fill="#525252" textLength="49" lengthAdjust="spacingAndGlyphs">20,000,000</text>
<line x1="961" y1="727.2" x2="964" y2="727.2" stroke="#888" stroke-width="1"/>
<line x1="961" y1="720.65" x2="964" y2="720.65" stroke="#888" stroke-width="1"/>
<line x1="961" y1="714.1" x2="964" y2="714.1" stroke="#888" stroke-width="1"/>
<line x1="961" y1="707.55" x2="964" y2="707.55" stroke="#888" stroke-width="1"/>
<line x1="961" y1="766.25" x2="967" y2="766.25" stroke="#777" stroke-width="1"/>
<text x="969" y="770.5" font-size="12" fill="#525252" textLength="49" lengthAdjust="spacingAndGlyphs">17,500,000</text>
<line x1="961" y1="759.7" x2="964" y2="759.7" stroke="#888" stroke-width="1"/>
<line x1="961" y1="753.15" x2="964" y2="753.15" stroke="#888" stroke-width="1"/>
<line x1="961" y1="746.6" x2="964" y2="746.6" stroke="#888" stroke-width="1"/>
<line x1="961" y1="740.05" x2="964" y2="740.05" stroke="#888" stroke-width="1"/>
<line x1="961" y1="772.8" x2="964" y2="772.8" stroke="#888" stroke-width="1"/>
<line x1="961" y1="779.35" x2="964" y2="779.35" stroke="#888" stroke-width="1"/>
<line x1="961" y1="785.9" x2="964" y2="785.9" stroke="#888" stroke-width="1"/>
<text x="963" y="52" font-size="12" fill="#e03030" textLength="42" lengthAdjust="spacingAndGlyphs">LC:11.10</text>
<text x="963" y="62.8" font-size="12" fill="#2a62d0" textLength="46.5" lengthAdjust="spacingAndGlyphs">HC:-21.61</text>
<rect x="965.4" y="384" width="51.6" height="11.3" fill="#e8200e"/>
<text x="969" y="393.4" font-size="12.5" fill="#ffffff" textLength="38" lengthAdjust="spacingAndGlyphs">2,371.79</text>
<text x="969" y="404.4" font-size="12" fill="#e84040" textLength="27" lengthAdjust="spacingAndGlyphs">0.00%</text>
<rect x="965.5" y="647.5" width="51.3" height="11.5" fill="#1a5fd0"/>
<text x="969" y="657.3" font-size="12" fill="#ffffff" textLength="5.5" lengthAdjust="spacingAndGlyphs">0</text>
<text x="969" y="667.6" font-size="12" fill="#2a62d0" textLength="27" lengthAdjust="spacingAndGlyphs">0.00%</text>
<rect x="1010.3" y="527.5" width="6.7" height="5.8" fill="#555"/>
<line x1="1011.8" y1="528.9" x2="1015.5" y2="531.9" stroke="#ddd" stroke-width="0.9"/>
<line x1="1015.5" y1="528.9" x2="1011.8" y2="531.9" stroke="#ddd" stroke-width="0.9"/>
<rect x="1010.3" y="674.3" width="6.7" height="5.8" fill="#555"/>
<line x1="1011.8" y1="675.6999999999999" x2="1015.5" y2="678.6999999999999" stroke="#ddd" stroke-width="0.9"/>
<line x1="1015.5" y1="675.6999999999999" x2="1011.8" y2="678.6999999999999" stroke="#ddd" stroke-width="0.9"/>
<text x="3" y="801" font-size="12" fill="#525252" textLength="36" lengthAdjust="spacingAndGlyphs">2021/12</text>
<text x="57.5" y="801" font-size="12" fill="#525252" textLength="36" lengthAdjust="spacingAndGlyphs">2022/01</text>
<text x="142.0" y="801" font-size="12" fill="#525252" textLength="10.5" lengthAdjust="spacingAndGlyphs">02</text>
<text x="217.0" y="801" font-size="12" fill="#525252" textLength="10.5" lengthAdjust="spacingAndGlyphs">03</text>
<text x="305.0" y="801" font-size="12" fill="#525252" textLength="10.5" lengthAdjust="spacingAndGlyphs">04</text>
<text x="394.0" y="801" font-size="12" fill="#525252" textLength="10.5" lengthAdjust="spacingAndGlyphs">05</text>
<text x="482.0" y="801" font-size="12" fill="#525252" textLength="10.5" lengthAdjust="spacingAndGlyphs">06</text>
<text x="566.0" y="801" font-size="12" fill="#525252" textLength="10.5" lengthAdjust="spacingAndGlyphs">07</text>
<text x="654.2" y="801" font-size="12" fill="#525252" textLength="10.5" lengthAdjust="spacingAndGlyphs">08</text>
<text x="746.7" y="801" font-size="12" fill="#525252" textLength="10.5" lengthAdjust="spacingAndGlyphs">09</text>
<text x="830.5" y="801" font-size="12" fill="#525252" textLength="10.5" lengthAdjust="spacingAndGlyphs">10</text>
<text x="910.4" y="801" font-size="12" fill="#525252" textLength="10.5" lengthAdjust="spacingAndGlyphs">11</text>
<text x="969" y="801" font-size="12" fill="#525252" textLength="27" lengthAdjust="spacingAndGlyphs">11/08</text>
<rect x="4.6" y="46.5" width="4" height="4.5" fill="#b8b8b8" stroke="#8a8a8a" stroke-width="0.8"/>
<rect x="11.5" y="42" width="65.5" height="13.6" fill="#e9e9e9" stroke="#c9c9c9" stroke-width="1"/>
<text x="14.5" y="53.5" font-size="12" fill="#4a4a4a" textLength="60.5" lengthAdjust="spacingAndGlyphs">종합(KOSPI)</text>
<rect x="80.8" y="46.5" width="4" height="4.5" fill="#b8b8b8" stroke="#8a8a8a" stroke-width="0.8"/>
<text x="91" y="53.5" font-size="12" fill="#e61ec8" textLength="46" lengthAdjust="spacingAndGlyphs">종가 지수</text>
<text x="140.7" y="53.5" font-size="12" fill="#e61ec8" textLength="5.5" lengthAdjust="spacingAndGlyphs">5</text>
<text x="153.3" y="53.5" font-size="12" fill="#2038b8" textLength="10.5" lengthAdjust="spacingAndGlyphs">10</text>
<text x="170.5" y="53.5" font-size="12" fill="#f2a80e" textLength="11" lengthAdjust="spacingAndGlyphs">20</text>
<text x="188" y="53.5" font-size="12" fill="#1a9a4a" textLength="11" lengthAdjust="spacingAndGlyphs">60</text>
<text x="206.3" y="53.5" font-size="12" fill="#777" textLength="15.5" lengthAdjust="spacingAndGlyphs">120</text>
<rect x="4.6" y="528.3" width="4" height="4.5" fill="#b8b8b8" stroke="#8a8a8a" stroke-width="0.8"/>
<text x="14.5" y="536.2" font-size="12" fill="#28a0a8" textLength="32" lengthAdjust="spacingAndGlyphs">거래량</text>
<text x="54" y="536.2" font-size="12" fill="#e648d2" textLength="29.5" lengthAdjust="spacingAndGlyphs">단순 5</text>
<text x="90.3" y="536.2" font-size="12" fill="#f0b020" textLength="11" lengthAdjust="spacingAndGlyphs">20</text>
<text x="108.3" y="536.2" font-size="12" fill="#2aa050" textLength="11" lengthAdjust="spacingAndGlyphs">60</text>
<text x="126.5" y="536.2" font-size="12" fill="#777" textLength="15.5" lengthAdjust="spacingAndGlyphs">120</text>
<text x="5.5" y="547.9" font-size="12" fill="#4a4a4a" textLength="52.5" lengthAdjust="spacingAndGlyphs">0주(0.00%)</text>
<rect x="4.6" y="675.5" width="4" height="4.5" fill="#b8b8b8" stroke="#8a8a8a" stroke-width="0.8"/>
<text x="14.5" y="683" font-size="12" fill="#4a40c8" textLength="42" lengthAdjust="spacingAndGlyphs">신용잔고</text>
<text x="51.5" y="78.2" font-size="12" fill="#ee2a1c" textLength="102" lengthAdjust="spacingAndGlyphs">최고 3,025.77 (12/24)</text>
<path d="M39.4,75.3 L46.9,70.2 L46.9,80.6 Z" fill="#e8200e"/>
<line x1="46.5" y1="75" x2="50.6" y2="75" stroke="#e8200e" stroke-width="1"/>
<text x="705.4" y="508.2" font-size="12" fill="#2a30ea" textLength="101.6" lengthAdjust="spacingAndGlyphs">최저 2,134.77 (09/30)</text>
<line x1="811.6" y1="504.5" x2="821" y2="504.5" stroke="#2028e6" stroke-width="1.2"/>
<path d="M825,504.5 L819.4,500.8 L819.4,508.3 Z" fill="#2028e6"/>
<line x1="826.3" y1="499.5" x2="826.3" y2="507" stroke="#2a58e0" stroke-width="1"/>
<rect x="0" y="0" width="1024" height="19" fill="#cdcdcd"/>
<line x1="0" y1="18.8" x2="742" y2="18.8" stroke="#b9b9b9" stroke-width="1"/>
<rect x="1.5" y="0.5" width="15.5" height="16.5" fill="#ececec" stroke="#a8a8a8" stroke-width="1"/>
<path d="M6.2,5 H14.3 V14 H6.2 Z" fill="none" stroke="#333" stroke-width="1.1"/>
<rect x="5.7" y="4" width="9.1" height="2.4" fill="#333"/>
<path d="M4.4,11.6 L8.6,8.5 V14.6 Z" fill="#333"/>
<line x1="11.6" y1="6.4" x2="11.6" y2="14" stroke="#333" stroke-width="1.5"/>
<rect x="20.5" y="0.5" width="30.5" height="16.5" fill="#fff" stroke="#a8a8a8" stroke-width="1"/>
<text x="23" y="13" font-size="12" fill="#777" textLength="19" lengthAdjust="spacingAndGlyphs">업종</text>
<rect x="51" y="0.5" width="12.5" height="16.5" fill="#ececec" stroke="#a8a8a8" stroke-width="1"/>
<path d="M54.0,6.9 L60.400000000000006,6.9 L57.2,10.64 Z" fill="#555"/>
<rect x="66" y="0.5" width="16" height="16.5" fill="#ececec" stroke="#a8a8a8" stroke-width="1"/>
<text x="68.6" y="13.2" font-size="12" fill="#222" textLength="10.5" lengthAdjust="spacingAndGlyphs">전</text>
<rect x="85" y="0.5" width="47.5" height="16.5" fill="#fff" stroke="#a8a8a8" stroke-width="1"/>
<text x="87" y="13" font-size="12" fill="#222" textLength="14.5" lengthAdjust="spacingAndGlyphs">001</text>
<rect x="132.5" y="0.5" width="12.0" height="16.5" fill="#ececec" stroke="#a8a8a8" stroke-width="1"/>
<path d="M135.3,6.9 L141.7,6.9 L138.5,10.64 Z" fill="#555"/>
<rect x="145" y="0.5" width="16" height="16.5" fill="#ececec" stroke="#a8a8a8" stroke-width="1"/>
<circle cx="151.3" cy="7.6" r="3.1" fill="none" stroke="#777" stroke-width="1.1"/>
<line x1="153.6" y1="10" x2="157" y2="13.3" stroke="#777" stroke-width="1.5"/>
<rect x="163.5" y="0.5" width="14.5" height="16.5" fill="#ececec" stroke="#a8a8a8" stroke-width="1"/>
<path d="M166,7 H168 L171.8,3.6 V13.6 L168,10.2 H166 Z" fill="#555"/>
<line x1="173.5" y1="7" x2="175.5" y2="7" stroke="#777" stroke-width="1"/>
<line x1="173.5" y1="10" x2="175.5" y2="10" stroke="#777" stroke-width="1"/>
<rect x="178.5" y="0.5" width="8.5" height="16.5" fill="#ececec" stroke="#a8a8a8" stroke-width="1"/>
<path d="M180.39999999999998,7.299999999999999 L185.0,7.299999999999999 L182.7,10.36 Z" fill="#555"/>
<rect x="189.5" y="0.5" width="71" height="16.5" fill="#fff" stroke="#a8a8a8" stroke-width="1"/>
<text x="192.2" y="13" font-size="12" fill="#333" textLength="61.5" lengthAdjust="spacingAndGlyphs">종합(KOSPI)</text>
<rect x="262.5" y="0.5" width="16.5" height="16.5" fill="#5e7186" stroke="#5e7186" stroke-width="1"/>
<text x="265.5" y="13.2" font-size="12" fill="#e8eef4" textLength="10.5" lengthAdjust="spacingAndGlyphs">일</text>
<rect x="279.5" y="0.5" width="16.0" height="16.5" fill="#ececec" stroke="#a8a8a8" stroke-width="1"/>
<text x="282.4" y="13.2" font-size="12" fill="#222" textLength="10.5" lengthAdjust="spacingAndGlyphs">주</text>
<rect x="296.5" y="0.5" width="16.0" height="16.5" fill="#ececec" stroke="#a8a8a8" stroke-width="1"/>
<text x="299.4" y="13.2" font-size="12" fill="#222" textLength="10.5" lengthAdjust="spacingAndGlyphs">월</text>
<rect x="313" y="0.5" width="16.5" height="16.5" fill="#ececec" stroke="#a8a8a8" stroke-width="1"/>
<text x="315.9" y="13.2" font-size="12" fill="#222" textLength="10.5" lengthAdjust="spacingAndGlyphs">년</text>
<rect x="332" y="0.5" width="16" height="16.5" fill="#ececec" stroke="#a8a8a8" stroke-width="1"/>
<text x="334.9" y="13.2" font-size="12" fill="#222" textLength="10.5" lengthAdjust="spacingAndGlyphs">분</text>
<rect x="348.5" y="0.5" width="16.0" height="16.5" fill="#ececec" stroke="#a8a8a8" stroke-width="1"/>
<text x="351.4" y="13.2" font-size="12" fill="#222" textLength="10.5" lengthAdjust="spacingAndGlyphs">틱</text>
<rect x="367" y="0.5" width="16.3" height="16.5" fill="#ececec" stroke="#a8a8a8" stroke-width="1"/>
<text x="372.7" y="13" font-size="12" fill="#7a7a7a" textLength="5" lengthAdjust="spacingAndGlyphs">1</text>
<rect x="384" y="0.5" width="16.3" height="16.5" fill="#ececec" stroke="#a8a8a8" stroke-width="1"/>
<text x="389.7" y="13" font-size="12" fill="#7a7a7a" textLength="5" lengthAdjust="spacingAndGlyphs">3</text>
<rect x="401" y="0.5" width="16.3" height="16.5" fill="#ececec" stroke="#a8a8a8" stroke-width="1"/>
<text x="406.7" y="13" font-size="12" fill="#7a7a7a" textLength="5" lengthAdjust="spacingAndGlyphs">5</text>
<rect x="418" y="0.5" width="16.3" height="16.5" fill="#ececec" stroke="#a8a8a8" stroke-width="1"/>
<text x="420.9" y="13" font-size="12" fill="#7a7a7a" textLength="10.5" lengthAdjust="spacingAndGlyphs">10</text>
<rect x="435" y="0.5" width="16.3" height="16.5" fill="#ececec" stroke="#a8a8a8" stroke-width="1"/>
<text x="437.9" y="13" font-size="12" fill="#7a7a7a" textLength="10.5" lengthAdjust="spacingAndGlyphs">20</text>
<rect x="451.7" y="0.5" width="16.3" height="16.5" fill="#ececec" stroke="#a8a8a8" stroke-width="1"/>
<text x="454.6" y="13" font-size="12" fill="#7a7a7a" textLength="10.5" lengthAdjust="spacingAndGlyphs">30</text>
<rect x="468.4" y="0.5" width="16.3" height="16.5" fill="#ececec" stroke="#a8a8a8" stroke-width="1"/>
<text x="471.3" y="13" font-size="12" fill="#7a7a7a" textLength="10.5" lengthAdjust="spacingAndGlyphs">60</text>
<rect x="485" y="0.5" width="16.3" height="16.5" fill="#ececec" stroke="#a8a8a8" stroke-width="1"/>
<text x="485.7" y="13" font-size="12" fill="#7a7a7a" textLength="15" lengthAdjust="spacingAndGlyphs">120</text>
<rect x="503.5" y="0.5" width="20.5" height="16.5" fill="#ececec" stroke="#a8a8a8" stroke-width="1"/>
<rect x="524.5" y="0.5" width="11.5" height="16.5" fill="#ececec" stroke="#a8a8a8" stroke-width="1"/>
<path d="M527.4000000000001,7.0 L533.0,7.0 L530.2,10.4 Z" fill="#aaa"/>
<rect x="538.5" y="0.5" width="25.5" height="16.5" fill="#fff" stroke="#a8a8a8" stroke-width="1"/>
<text x="546.5" y="13" font-size="12" fill="#222" textLength="16" lengthAdjust="spacingAndGlyphs">222</text>
<text x="566" y="13" font-size="12" fill="#444" textLength="20" lengthAdjust="spacingAndGlyphs">/600</text>
<rect x="596.5" y="0.5" width="16.3" height="16.5" fill="#ececec" stroke="#a8a8a8" stroke-width="1"/>
<rect x="613.2" y="0.5" width="16.3" height="16.5" fill="#ececec" stroke="#a8a8a8" stroke-width="1"/>
<rect x="630" y="0.5" width="16.3" height="16.5" fill="#ececec" stroke="#a8a8a8" stroke-width="1"/>
<rect x="646.8" y="0.5" width="16.3" height="16.5" fill="#ececec" stroke="#a8a8a8" stroke-width="1"/>
<rect x="598.7" y="3.6" width="3" height="5" fill="#444"/>
<line x1="600.2" y1="2.6" x2="600.2" y2="10.4" stroke="#555" stroke-width="1"/>
<rect x="604.2" y="4.4" width="3" height="5" fill="#444"/>
<line x1="605.7" y1="3" x2="605.7" y2="11" stroke="#555" stroke-width="1"/>
<line x1="606" y1="11.9" x2="611" y2="11.9" stroke="#333" stroke-width="1.7"/>
<line x1="608.5" y1="9.4" x2="608.5" y2="14.4" stroke="#333" stroke-width="1.7"/>
<path d="M615.4,5.6 L618.6,3.4 L622.6,7.6 L626.2,3.6" fill="none" stroke="#777" stroke-width="0.9"/>
<path d="M619.8,3.2 L625,8.4" fill="none" stroke="#777" stroke-width="0.9"/>
<line x1="622.7" y1="11.9" x2="627.7" y2="11.9" stroke="#333" stroke-width="1.7"/>
<line x1="625.2" y1="9.4" x2="625.2" y2="14.4" stroke="#333" stroke-width="1.7"/>
<rect x="633" y="3.6" width="10.6" height="10.4" fill="#ececec" stroke="#666" stroke-width="1.2"/>
<rect x="635.7" y="3.6" width="5.2" height="3.6" fill="#ececec" stroke="#666" stroke-width="1"/>
<rect x="634.9" y="9.4" width="6.8" height="4.6" fill="#ececec" stroke="#666" stroke-width="1"/>
<circle cx="654.9" cy="8.6" r="2.7" fill="none" stroke="#555" stroke-width="2"/>
<line x1="658.2" y1="8.6" x2="660.0" y2="8.6" stroke="#555" stroke-width="1.6"/>
<line x1="657.23" y1="10.93" x2="658.51" y2="12.21" stroke="#555" stroke-width="1.6"/>
<line x1="654.9" y1="11.9" x2="654.9" y2="13.7" stroke="#555" stroke-width="1.6"/>
<line x1="652.57" y1="10.93" x2="651.29" y2="12.21" stroke="#555" stroke-width="1.6"/>
<line x1="651.6" y1="8.6" x2="649.8" y2="8.6" stroke="#555" stroke-width="1.6"/>
<line x1="652.57" y1="6.27" x2="651.29" y2="4.99" stroke="#555" stroke-width="1.6"/>
<line x1="654.9" y1="5.3" x2="654.9" y2="3.5" stroke="#555" stroke-width="1.6"/>
<line x1="657.23" y1="6.27" x2="658.51" y2="4.99" stroke="#555" stroke-width="1.6"/>
<rect x="665.5" y="0.5" width="55.5" height="16.5" fill="#fff" stroke="#a8a8a8" stroke-width="1"/>
<text x="668" y="13" font-size="12" fill="#222" textLength="52" lengthAdjust="spacingAndGlyphs">2022/11/08</text>
<rect x="722" y="0.5" width="16" height="16.5" fill="#ececec" stroke="#a8a8a8" stroke-width="1"/>
<rect x="726" y="5" width="8.6" height="7.4" fill="#fff" stroke="#555" stroke-width="1"/>
<rect x="725.5" y="4.5" width="9.6" height="2.2" fill="#444"/>
<line x1="728.9" y1="6.5" x2="728.9" y2="12.4" stroke="#999" stroke-width="0.8"/>
<line x1="731.8" y1="6.5" x2="731.8" y2="12.4" stroke="#999" stroke-width="0.8"/>
<line x1="726" y1="9.6" x2="734.6" y2="9.6" stroke="#999" stroke-width="0.8"/>
<rect x="0" y="19" width="1024" height="20" fill="#cdcdcd"/>
<rect x="1.5" y="20.5" width="662.5" height="17" fill="#f0f0f0" stroke="#9c9c9c" stroke-width="1.2"/>
<text x="11.8" y="33.3" font-size="12" fill="#222" textLength="42.3" lengthAdjust="spacingAndGlyphs">2,371.79</text>
<text x="141.5" y="33.3" font-size="12" fill="#222" textLength="10.5" lengthAdjust="spacingAndGlyphs">0%</text>
<line x1="153.3" y1="21" x2="153.3" y2="37" stroke="#c4c4c4" stroke-width="1"/>
<text x="156.3" y="33.3" font-size="12" fill="#222" textLength="31" lengthAdjust="spacingAndGlyphs">거래량</text>
<text x="263.6" y="33.3" font-size="12" fill="#222" textLength="5" lengthAdjust="spacingAndGlyphs">0</text>
<text x="302.5" y="33.3" font-size="12" fill="#222" textLength="10.5" lengthAdjust="spacingAndGlyphs">0%</text>
<line x1="315.2" y1="21" x2="315.2" y2="37" stroke="#c4c4c4" stroke-width="1"/>
<text x="318.3" y="33.3" font-size="12" fill="#222" textLength="40.5" lengthAdjust="spacingAndGlyphs">거래대금</text>
<text x="420" y="33.3" font-size="12" fill="#222" textLength="26" lengthAdjust="spacingAndGlyphs">0백만</text>
<line x1="448.5" y1="21" x2="448.5" y2="37" stroke="#c4c4c4" stroke-width="1"/>
<text x="449.8" y="33.3" font-size="12" fill="#222" textLength="9" lengthAdjust="spacingAndGlyphs">시</text>
<text x="487" y="33.3" font-size="12" fill="#2a62d0" textLength="5.3" lengthAdjust="spacingAndGlyphs">0</text>
<text x="521.3" y="33.3" font-size="12" fill="#222" textLength="9" lengthAdjust="spacingAndGlyphs">고</text>
<text x="559" y="33.3" font-size="12" fill="#2a62d0" textLength="5.3" lengthAdjust="spacingAndGlyphs">0</text>
<text x="593.3" y="33.3" font-size="12" fill="#222" textLength="9" lengthAdjust="spacingAndGlyphs">저</text>
<text x="631" y="33.3" font-size="12" fill="#2a62d0" textLength="5.3" lengthAdjust="spacingAndGlyphs">0</text>
<rect x="667" y="20.5" width="34.5" height="17" fill="#f6cfc8" stroke="#a8a8a8" stroke-width="1"/>
<text x="673.5" y="33.3" font-size="12" fill="#222" textLength="21" lengthAdjust="spacingAndGlyphs">매수</text>
<rect x="704.5" y="20.5" width="34" height="17" fill="#c6dcf4" stroke="#a8a8a8" stroke-width="1"/>
<text x="711" y="33.3" font-size="12" fill="#222" textLength="21" lengthAdjust="spacingAndGlyphs">매도</text>
<rect x="0" y="805.5" width="1024" height="16.5" fill="#f0f0f0"/>
<rect x="0" y="805.5" width="1019.5" height="0.8" fill="#9a9a9a"/>
<rect x="0" y="806" width="693" height="16" fill="#f5f5f5"/>
<rect x="1.5" y="806.3" width="13.5" height="14" fill="#f4f4f4"/>
<line x1="1.5" y1="820.4" x2="15.5" y2="820.4" stroke="#666" stroke-width="1.2"/>
<line x1="15.2" y1="806.3" x2="15.2" y2="820.4" stroke="#888" stroke-width="1"/>
<path d="M5.6,813.5 L9.4,810.4 V816.6 Z" fill="#111"/>
<rect x="442.5" y="806.3" width="250" height="14" fill="#e9e9e9"/>
<line x1="428" y1="820.5" x2="692.5" y2="820.5" stroke="#777" stroke-width="1.3"/>
<line x1="692.6" y1="806.3" x2="692.6" y2="821" stroke="#777" stroke-width="1"/>
<rect x="693.3" y="806.3" width="13.6" height="14.6" fill="#f6f6f6" stroke="#8a8a8a" stroke-width="1"/>
<path d="M702.3,813.5 L698.6,810.3 V816.7 Z" fill="#111"/>
<rect x="707.7" y="806.3" width="14.2" height="14.6" fill="#f6f6f6" stroke="#8a8a8a" stroke-width="1"/>
<rect x="722.6" y="806.3" width="14.2" height="14.6" fill="#f6f6f6" stroke="#8a8a8a" stroke-width="1"/>
<rect x="737.5" y="806.3" width="14.2" height="14.6" fill="#f6f6f6" stroke="#8a8a8a" stroke-width="1"/>
<path d="M714.3,813.3 L710.5,810.2 V816.4 Z M718.4,813.3 L714.6,810.2 V816.4 Z" fill="#111" transform="translate(1429,0) scale(-1,1)"/>
<rect x="727.3" y="810.4" width="5" height="5.6" fill="#111"/>
<path d="M745.4,813.3 L741.6,810.2 V816.4 Z M749.3,813.3 L745.5,810.2 V816.4 Z" fill="#111"/>
<line x1="757.5" y1="811" x2="818" y2="811" stroke="#8a8a8a" stroke-width="1.3"/>
<line x1="782" y1="808" x2="782" y2="816.5" stroke="#777" stroke-width="1.4"/>
<line x1="759.1" y1="817.6" x2="759.1" y2="820.4" stroke="#444" stroke-width="1"/>
<line x1="764.96" y1="817.6" x2="764.96" y2="820.4" stroke="#444" stroke-width="1"/>
<line x1="770.82" y1="817.6" x2="770.82" y2="820.4" stroke="#444" stroke-width="1"/>
<line x1="776.68" y1="817.6" x2="776.68" y2="820.4" stroke="#444" stroke-width="1"/>
<line x1="782.54" y1="817.6" x2="782.54" y2="820.4" stroke="#444" stroke-width="1"/>
<line x1="788.4" y1="817.6" x2="788.4" y2="820.4" stroke="#444" stroke-width="1"/>
<line x1="794.26" y1="817.6" x2="794.26" y2="820.4" stroke="#444" stroke-width="1"/>
<line x1="800.12" y1="817.6" x2="800.12" y2="820.4" stroke="#444" stroke-width="1"/>
<line x1="805.98" y1="817.6" x2="805.98" y2="820.4" stroke="#444" stroke-width="1"/>
<line x1="811.84" y1="817.6" x2="811.84" y2="820.4" stroke="#444" stroke-width="1"/>
<line x1="817.7" y1="817.6" x2="817.7" y2="820.4" stroke="#444" stroke-width="1"/>
<path d="M826.5,808.5 H835.5 V812 M826.5,808.5 V816 H830" fill="none" stroke="#8c8c8c" stroke-width="1.1"/>
<rect x="830.6" y="812.4" width="6" height="6" fill="#fff" stroke="#555" stroke-width="1"/>
<line x1="833.6" y1="812.4" x2="833.6" y2="818.4" stroke="#555" stroke-width="0.8"/>
<line x1="830.6" y1="815.4" x2="836.6" y2="815.4" stroke="#555" stroke-width="0.8"/>
<rect x="841.5" y="808.3" width="7.5" height="6.5" fill="none" stroke="#8c8c8c" stroke-width="1.1"/>
<rect x="844.5" y="811.6" width="7.5" height="6.8" fill="#f0f0f0" stroke="#8c8c8c" stroke-width="1.1"/>
<line x1="844.5" y1="812.6" x2="852" y2="812.6" stroke="#8c8c8c" stroke-width="1.6"/>
<line x1="855.5" y1="809" x2="866" y2="809" stroke="#8c8c8c" stroke-width="1" stroke-dasharray="1.3,1.3"/>
<line x1="855.5" y1="818" x2="866" y2="818" stroke="#8c8c8c" stroke-width="1" stroke-dasharray="1.3,1.3"/>
<path d="M856.5,813 L859,815.5 L864.5,810.5" fill="none" stroke="#8c8c8c" stroke-width="1" stroke-dasharray="1.5,1"/>
<rect x="869.5" y="806.3" width="14.5" height="15" fill="#fbfbfb"/>
<line x1="869.6" y1="806.3" x2="869.6" y2="821" stroke="#999" stroke-width="1"/>
<line x1="869.5" y1="806.5" x2="884" y2="806.5" stroke="#bbb" stroke-width="1"/>
<path d="M873,809.3 H882 M874.3,809.3 V819.5 M874.6,809.8 L881,816.6 M875,813.3 V810 H878.5" fill="none" stroke="#555" stroke-width="1.2"/>
<path d="M886.5,810.6 H897.5 M887,817.5 L890.5,812 L893,815.5 L896,811.5" fill="none" stroke="#8c8c8c" stroke-width="1.1"/>
<path d="M904.5,807.5 V819.5 M901.5,817.5 L904.5,812 L907.5,817 L911.5,813" fill="none" stroke="#8c8c8c" stroke-width="1.1"/>
<path d="M915.5,818.5 L924.5,808 M917,818.5 L920,813.5 L923,817.5 L926.5,814" fill="none" stroke="#8c8c8c" stroke-width="1.2"/>
<path d="M931.5,815 L936,809 H943 L938.5,815 Z M931.5,815 V818 H938.5 V815 M938.5,818 L943,812.5 V809" fill="none" stroke="#8c8c8c" stroke-width="1.1"/>
<line x1="939.6" y1="817" x2="939.6" y2="820" stroke="#555" stroke-width="1"/>
<line x1="941.3000000000001" y1="817" x2="941.3000000000001" y2="820" stroke="#555" stroke-width="1"/>
<line x1="943.0" y1="817" x2="943.0" y2="820" stroke="#555" stroke-width="1"/>
<rect x="949.5" y="808.3" width="8.5" height="6" fill="none" stroke="#8c8c8c" stroke-width="1.1"/>
<rect x="946.5" y="811.8" width="8.5" height="7" fill="#f0f0f0" stroke="#666" stroke-width="1.1"/>
<path d="M947.5,817 L950,814.5 L952,816 L954.5,813" fill="none" stroke="#666" stroke-width="0.9"/>
<circle cx="966.3" cy="811.7" r="3.8" fill="none" stroke="#555" stroke-width="1.2"/>
<line x1="968.8" y1="814.6" x2="972.4" y2="818.6" stroke="#555" stroke-width="1.6"/>
<line x1="977.8" y1="813.8" x2="986" y2="813.8" stroke="#555" stroke-width="1.9"/>
<line x1="993" y1="813.8" x2="1002" y2="813.8" stroke="#444" stroke-width="2"/>
<line x1="997.5" y1="809.3" x2="997.5" y2="818.3" stroke="#444" stroke-width="2"/>
<text x="1007.6" y="819" font-size="14" fill="#444" textLength="9" lengthAdjust="spacingAndGlyphs" font-weight="bold">A</text>
<rect x="1022" y="0" width="2" height="822" fill="#a6a6a6"/>
<rect x="1022" y="0" width="0.7" height="822" fill="#b8b8b8"/>
</svg>
</body></html>
